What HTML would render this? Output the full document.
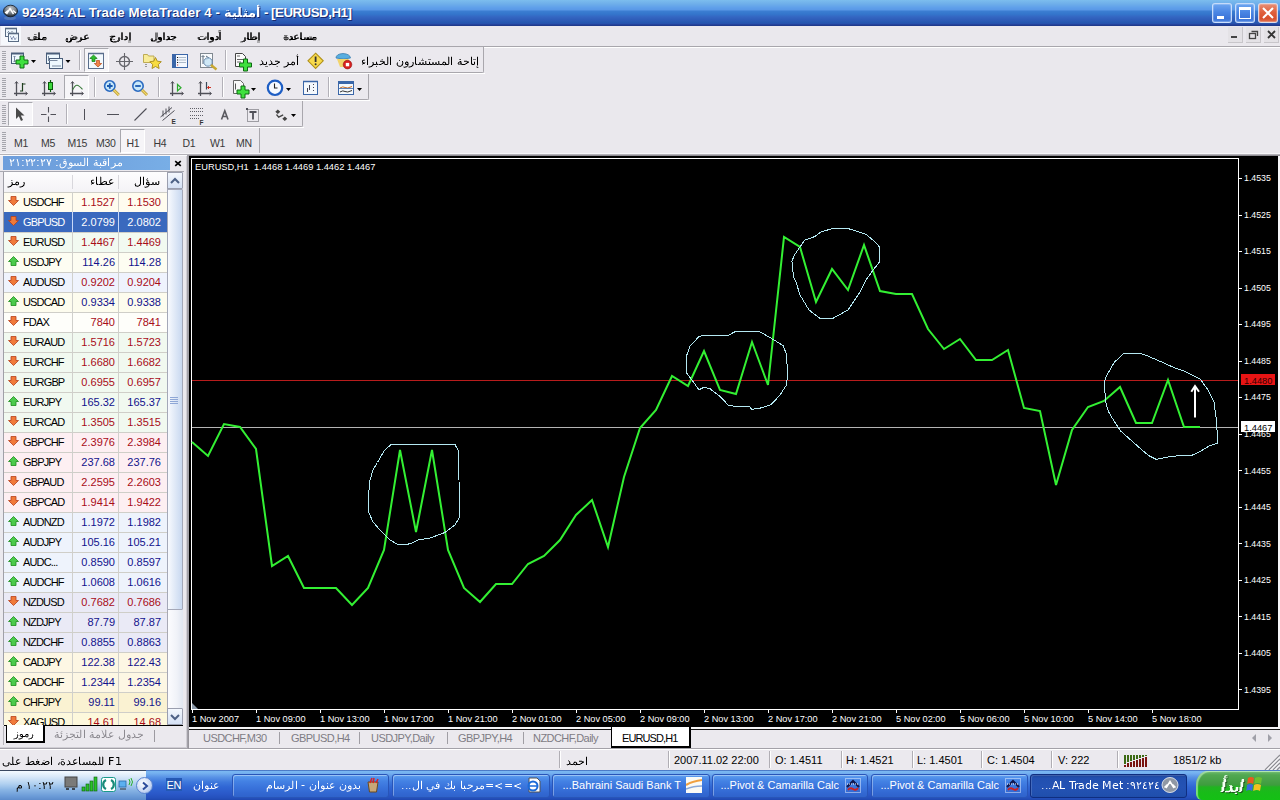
<!DOCTYPE html><html><head><meta charset="utf-8"><style>
*{box-sizing:border-box}
body{margin:0;width:1280px;height:800px;overflow:hidden;position:relative;background:#EAE8ED;font-family:"Liberation Sans",sans-serif;font-size:11px;color:#000}
.ab{position:absolute}
.t{position:absolute;white-space:nowrap;line-height:1}
</style></head><body><div class="ab" style="left:0;top:0;width:1280px;height:26px;background:linear-gradient(#7CBDEE 0px,#6EAEEA 4px,#5E9EEA 8px,#5A98E6 10px,#3C7ED2 11px,#3476CC 14px,#3466C2 17px,#2E5CB8 20px,#2457AE 23px,#2A4CAC 24px,#1F3A8C 25px,#1F3A8C 26px)"></div><div class="t" style="left:22px;top:6px;font-size:13.3px;font-weight:bold;letter-spacing:0.1px;color:#fff;text-shadow:1px 1px 0 #1A2A6E">92434: AL Trade MetaTrader 4 -</div><div class="t" style="left:264px;top:6px;font-size:13.3px;font-weight:bold;letter-spacing:-0.5px;color:#fff;text-shadow:1px 1px 0 #1A2A6E">- [EURUSD,H1]</div><svg width="36" height="15" style="position:absolute;left:225px;top:5px" fill="#1A2A6E" shape-rendering="crispEdges"><path d="M34 0h1v1h-1zM35 1h1v1h-1zM35 2h1v1h-1zM35 4h1v1h-1zM35 5h1v1h-1zM21 6h1v1h-1zM35 6h1v1h-1zM21 7h1v1h-1zM35 7h1v1h-1zM3 8h1v1h-1zM6 8h1v1h-1zM35 8h1v1h-1zM1 9h1v1h-1zM30 9h1v1h-1zM35 9h1v1h-1zM25 10h1v1h-1zM35 10h1v1h-1zM18 11h1v1h-1zM35 11h1v1h-1zM1 12h1v1h-1zM35 12h1v1h-1zM27 13h3v1h-3zM10 14h1v1h-1z" fill-opacity="0.25"/><path d="M34 2h1v1h-1zM14 3h1v1h-1zM35 3h1v1h-1zM14 4h1v1h-1zM14 5h1v1h-1zM21 5h1v1h-1zM2 6h2v1h-2zM14 6h1v1h-1zM14 7h1v1h-1zM20 7h1v1h-1zM14 8h1v1h-1zM6 9h1v1h-1zM9 9h1v1h-1zM14 9h1v1h-1zM20 9h1v1h-1zM26 9h1v1h-1zM3 10h1v1h-1zM9 10h1v1h-1zM14 10h1v1h-1zM20 10h1v1h-1zM28 11h1v1h-1zM4 12h1v1h-1zM10 12h1v1h-1zM15 12h1v1h-1zM18 12h1v1h-1zM21 12h1v1h-1zM9 14h1v1h-1z" fill-opacity="0.50"/><path d="M34 1h1v1h-1zM33 2h1v1h-1zM16 3h1v1h-1zM16 4h1v1h-1zM16 5h1v1h-1zM4 6h1v1h-1zM16 6h1v1h-1zM16 7h1v1h-1zM4 8h2v1h-2zM16 8h1v1h-1zM10 9h2v1h-2zM16 9h1v1h-1zM21 9h2v1h-2zM29 9h1v1h-1zM4 10h1v1h-1zM6 10h1v1h-1zM11 10h1v1h-1zM16 10h1v1h-1zM22 10h1v1h-1zM28 10h1v1h-1zM3 11h1v1h-1zM7 11h2v1h-2zM12 11h2v1h-2zM17 11h1v1h-1zM19 11h1v1h-1zM23 11h2v1h-2zM27 11h1v1h-1zM2 12h2v1h-2zM5 12h1v1h-1zM30 12h1v1h-1z" fill-opacity="0.75"/><path d="M33 1h1v1h-1zM15 3h1v1h-1zM33 3h2v1h-2zM15 4h1v1h-1zM33 4h2v1h-2zM15 5h1v1h-1zM33 5h2v1h-2zM15 6h1v1h-1zM33 6h2v1h-2zM15 7h1v1h-1zM22 7h1v1h-1zM33 7h2v1h-2zM15 8h1v1h-1zM33 8h2v1h-2zM2 9h4v1h-4zM15 9h1v1h-1zM27 9h2v1h-2zM33 9h2v1h-2zM1 10h2v1h-2zM5 10h1v1h-1zM10 10h1v1h-1zM15 10h1v1h-1zM21 10h1v1h-1zM26 10h2v1h-2zM29 10h2v1h-2zM33 10h2v1h-2zM1 11h2v1h-2zM4 11h3v1h-3zM9 11h3v1h-3zM14 11h3v1h-3zM20 11h3v1h-3zM25 11h2v1h-2zM29 11h2v1h-2zM33 11h2v1h-2zM6 12h4v1h-4zM11 12h4v1h-4zM16 12h2v1h-2zM19 12h2v1h-2zM22 12h8v1h-8zM33 12h2v1h-2zM11 14h1v1h-1z"/></svg><svg width="36" height="15" style="position:absolute;left:224px;top:4px" fill="#fff" shape-rendering="crispEdges"><path d="M34 0h1v1h-1zM35 1h1v1h-1zM35 2h1v1h-1zM35 4h1v1h-1zM35 5h1v1h-1zM21 6h1v1h-1zM35 6h1v1h-1zM21 7h1v1h-1zM35 7h1v1h-1zM3 8h1v1h-1zM6 8h1v1h-1zM35 8h1v1h-1zM1 9h1v1h-1zM30 9h1v1h-1zM35 9h1v1h-1zM25 10h1v1h-1zM35 10h1v1h-1zM18 11h1v1h-1zM35 11h1v1h-1zM1 12h1v1h-1zM35 12h1v1h-1zM27 13h3v1h-3zM10 14h1v1h-1z" fill-opacity="0.25"/><path d="M34 2h1v1h-1zM14 3h1v1h-1zM35 3h1v1h-1zM14 4h1v1h-1zM14 5h1v1h-1zM21 5h1v1h-1zM2 6h2v1h-2zM14 6h1v1h-1zM14 7h1v1h-1zM20 7h1v1h-1zM14 8h1v1h-1zM6 9h1v1h-1zM9 9h1v1h-1zM14 9h1v1h-1zM20 9h1v1h-1zM26 9h1v1h-1zM3 10h1v1h-1zM9 10h1v1h-1zM14 10h1v1h-1zM20 10h1v1h-1zM28 11h1v1h-1zM4 12h1v1h-1zM10 12h1v1h-1zM15 12h1v1h-1zM18 12h1v1h-1zM21 12h1v1h-1zM9 14h1v1h-1z" fill-opacity="0.50"/><path d="M34 1h1v1h-1zM33 2h1v1h-1zM16 3h1v1h-1zM16 4h1v1h-1zM16 5h1v1h-1zM4 6h1v1h-1zM16 6h1v1h-1zM16 7h1v1h-1zM4 8h2v1h-2zM16 8h1v1h-1zM10 9h2v1h-2zM16 9h1v1h-1zM21 9h2v1h-2zM29 9h1v1h-1zM4 10h1v1h-1zM6 10h1v1h-1zM11 10h1v1h-1zM16 10h1v1h-1zM22 10h1v1h-1zM28 10h1v1h-1zM3 11h1v1h-1zM7 11h2v1h-2zM12 11h2v1h-2zM17 11h1v1h-1zM19 11h1v1h-1zM23 11h2v1h-2zM27 11h1v1h-1zM2 12h2v1h-2zM5 12h1v1h-1zM30 12h1v1h-1z" fill-opacity="0.75"/><path d="M33 1h1v1h-1zM15 3h1v1h-1zM33 3h2v1h-2zM15 4h1v1h-1zM33 4h2v1h-2zM15 5h1v1h-1zM33 5h2v1h-2zM15 6h1v1h-1zM33 6h2v1h-2zM15 7h1v1h-1zM22 7h1v1h-1zM33 7h2v1h-2zM15 8h1v1h-1zM33 8h2v1h-2zM2 9h4v1h-4zM15 9h1v1h-1zM27 9h2v1h-2zM33 9h2v1h-2zM1 10h2v1h-2zM5 10h1v1h-1zM10 10h1v1h-1zM15 10h1v1h-1zM21 10h1v1h-1zM26 10h2v1h-2zM29 10h2v1h-2zM33 10h2v1h-2zM1 11h2v1h-2zM4 11h3v1h-3zM9 11h3v1h-3zM14 11h3v1h-3zM20 11h3v1h-3zM25 11h2v1h-2zM29 11h2v1h-2zM33 11h2v1h-2zM6 12h4v1h-4zM11 12h4v1h-4zM16 12h2v1h-2zM19 12h2v1h-2zM22 12h8v1h-8zM33 12h2v1h-2zM11 14h1v1h-1z"/></svg><svg class="ab" style="left:0px;top:0px" width="22" height="24" viewBox="0 0 22 24"><defs><radialGradient id="tg" cx=".5" cy=".3" r=".7"><stop offset="0" stop-color="#C8CCD0"/><stop offset=".6" stop-color="#707880"/><stop offset="1" stop-color="#1A2028"/></radialGradient></defs><ellipse cx="10" cy="18" rx="6" ry="2" fill="#6A88B8" opacity=".6"/><ellipse cx="10.5" cy="11" rx="7" ry="5.8" fill="url(#tg)" stroke="#101820" stroke-width=".8"/><path d="M6.5 14L10 8.5 13.5 14M8 10.5L5 13M13 10.5L16 13" stroke="#fff" stroke-width="1.4" fill="none"/></svg><div class="ab" style="left:1212px;top:3px;width:20px;height:20px;border:1px solid rgba(220,235,255,.85);border-radius:3px;background:linear-gradient(#6EA6F0,#4A86E4 45%,#3C74D8 80%,#4C84E0);box-shadow:inset 0 0 0 1px rgba(255,255,255,.2)"><div class="ab" style="left:4px;top:12px;width:7px;height:3px;background:#fff"></div></div><div class="ab" style="left:1235px;top:3px;width:20px;height:20px;border:1px solid rgba(220,235,255,.85);border-radius:3px;background:linear-gradient(#6EA6F0,#4A86E4 45%,#3C74D8 80%,#4C84E0);box-shadow:inset 0 0 0 1px rgba(255,255,255,.2)"><div class="ab" style="left:3px;top:3px;width:12px;height:12px;border:1px solid #fff;border-top-width:3px"></div></div><div class="ab" style="left:1258px;top:3px;width:20px;height:20px;border:1px solid rgba(220,235,255,.85);border-radius:3px;background:linear-gradient(#E89078,#E0603C 45%,#D8502C 80%,#E07050);box-shadow:inset 0 0 0 1px rgba(255,255,255,.2)"><svg class="ab" style="left:3px;top:3px" width="12" height="12"><path d="M1 1L11 11M11 1L1 11" stroke="#fff" stroke-width="2"/></svg></div><div class="ab" style="left:0;top:26px;width:1280px;height:20px;background:#EAE8ED"></div><div class="ab" style="left:0;top:46px;width:1280px;height:1px;background:#A8A6AC"></div><div class="ab" style="left:0;top:47px;width:1280px;height:1px;background:#fff"></div><svg width="20" height="9" style="position:absolute;left:27px;top:32px" fill="#000" shape-rendering="crispEdges"><path d="M9 2h1v1h-1zM6 4h1v1h-1zM0 5h1v1h-1zM15 5h1v1h-1zM19 5h1v1h-1zM0 6h1v1h-1zM10 6h1v1h-1zM13 6h1v1h-1zM19 7h1v1h-1zM2 8h1v1h-1zM6 8h2v1h-2zM16 8h3v1h-3z" fill-opacity="0.25"/><path d="M11 0h2v1h-2zM7 2h2v1h-2zM9 4h1v1h-1zM1 5h2v1h-2zM6 5h2v1h-2zM10 5h1v1h-1zM1 6h2v1h-2zM6 6h1v1h-1zM9 6h1v1h-1zM17 6h3v1h-3zM4 7h2v1h-2zM3 8h3v1h-3z" fill-opacity="0.50"/><path d="M11 1h2v1h-2zM11 2h2v1h-2zM11 3h2v1h-2zM7 4h2v1h-2zM11 4h2v1h-2zM8 5h2v1h-2zM11 5h2v1h-2zM7 6h2v1h-2zM15 6h2v1h-2zM1 7h3v1h-3zM6 7h1v1h-1zM16 7h3v1h-3z" fill-opacity="0.75"/><path d="M16 5h3v1h-3zM11 6h2v1h-2zM7 7h9v1h-9z"/></svg><svg width="24" height="9" style="position:absolute;left:65px;top:34px" fill="#000" shape-rendering="crispEdges"><path d="M21 0h2v1h-2zM19 1h1v1h-1zM11 2h1v1h-1zM5 3h2v1h-2zM12 3h1v1h-1zM9 4h1v1h-1zM12 4h1v1h-1zM17 4h1v1h-1zM0 5h1v1h-1zM11 5h1v1h-1zM21 5h1v1h-1zM0 6h1v1h-1zM11 7h1v1h-1zM2 8h1v1h-1zM5 8h1v1h-1zM11 8h3v1h-3z" fill-opacity="0.25"/><path d="M6 1h2v1h-2zM22 1h1v1h-1zM8 2h3v1h-3zM9 3h1v1h-1zM15 3h2v1h-2zM22 3h2v1h-2zM8 4h1v1h-1zM19 4h1v1h-1zM23 4h1v1h-1zM1 6h2v1h-2zM14 6h1v1h-1zM3 7h1v1h-1zM6 7h1v1h-1zM12 7h1v1h-1zM3 8h2v1h-2z" fill-opacity="0.50"/><path d="M20 1h2v1h-2zM19 2h2v1h-2zM7 3h2v1h-2zM10 3h2v1h-2zM19 3h2v1h-2zM1 4h2v1h-2zM5 4h3v1h-3zM10 4h2v1h-2zM15 4h2v1h-2zM22 4h1v1h-1zM1 5h2v1h-2zM5 5h1v1h-1zM10 5h1v1h-1zM15 5h1v1h-1zM20 5h1v1h-1zM15 6h2v1h-2zM13 7h3v1h-3z" fill-opacity="0.75"/><path d="M20 4h2v1h-2zM6 5h4v1h-4zM16 5h4v1h-4zM5 6h2v1h-2zM1 7h2v1h-2zM4 7h2v1h-2z"/></svg><svg width="23" height="11" style="position:absolute;left:109px;top:32px" fill="#000" shape-rendering="crispEdges"><path d="M2 3h4v1h-4zM0 4h1v1h-1zM6 4h1v1h-1zM18 4h1v1h-1zM1 5h1v1h-1zM4 5h1v1h-1zM16 5h1v1h-1zM3 6h1v1h-1zM11 6h1v1h-1zM16 6h1v1h-1zM3 7h1v1h-1zM14 7h1v1h-1zM18 7h1v1h-1zM15 8h2v1h-2zM19 8h1v1h-1zM1 9h1v1h-1zM19 9h3v1h-3zM3 10h1v1h-1zM7 10h1v1h-1zM19 10h3v1h-3z" fill-opacity="0.25"/><path d="M12 0h2v1h-2zM20 0h2v1h-2zM9 5h2v1h-2zM4 7h2v1h-2zM8 8h1v1h-1zM20 8h2v1h-2zM4 9h1v1h-1zM4 10h3v1h-3z" fill-opacity="0.50"/><path d="M12 1h2v1h-2zM20 1h2v1h-2zM12 2h2v1h-2zM20 2h2v1h-2zM12 3h2v1h-2zM20 3h2v1h-2zM1 4h2v1h-2zM12 4h2v1h-2zM16 4h2v1h-2zM20 4h2v1h-2zM2 5h2v1h-2zM12 5h2v1h-2zM17 5h2v1h-2zM20 5h2v1h-2zM1 6h2v1h-2zM9 6h2v1h-2zM12 6h2v1h-2zM17 6h2v1h-2zM20 6h2v1h-2zM9 7h2v1h-2zM12 7h2v1h-2zM15 7h1v1h-1zM20 7h2v1h-2zM1 8h2v1h-2zM9 8h2v1h-2zM5 9h5v1h-5z" fill-opacity="0.75"/><path d="M3 4h3v1h-3zM1 7h2v1h-2zM16 7h2v1h-2zM2 9h2v1h-2z"/></svg><svg width="27" height="11" style="position:absolute;left:150px;top:32px" fill="#000" shape-rendering="crispEdges"><path d="M5 0h3v1h-3zM19 4h2v1h-2zM7 5h1v1h-1zM17 5h1v1h-1zM26 5h1v1h-1zM7 6h1v1h-1zM17 6h1v1h-1zM25 6h1v1h-1zM0 7h1v1h-1zM7 7h1v1h-1zM15 7h1v1h-1zM9 8h1v1h-1zM16 8h2v1h-2zM22 8h3v1h-3zM1 9h1v1h-1zM5 9h2v1h-2zM11 9h1v1h-1zM6 10h1v1h-1zM9 10h1v1h-1z" fill-opacity="0.25"/><path d="M13 0h2v1h-2zM5 1h3v1h-3zM5 2h3v1h-3zM5 3h3v1h-3zM5 4h3v1h-3zM25 4h1v1h-1zM5 5h2v1h-2zM11 5h1v1h-1zM23 5h1v1h-1zM1 6h2v1h-2zM5 6h2v1h-2zM22 6h1v1h-1zM8 7h1v1h-1zM23 7h1v1h-1zM3 8h1v1h-1zM6 8h1v1h-1zM2 9h3v1h-3zM7 9h1v1h-1zM7 10h2v1h-2z" fill-opacity="0.50"/><path d="M13 1h2v1h-2zM13 2h2v1h-2zM13 3h2v1h-2zM13 4h2v1h-2zM17 4h2v1h-2zM23 4h2v1h-2zM8 5h1v1h-1zM13 5h2v1h-2zM18 5h2v1h-2zM13 6h2v1h-2zM23 6h2v1h-2zM1 7h2v1h-2zM5 7h2v1h-2zM13 7h2v1h-2zM16 7h1v1h-1zM22 7h1v1h-1zM4 8h2v1h-2zM10 8h2v1h-2zM8 9h3v1h-3z" fill-opacity="0.75"/><path d="M21 4h2v1h-2zM9 5h2v1h-2zM24 5h2v1h-2zM8 6h4v1h-4zM18 6h2v1h-2zM9 7h3v1h-3zM17 7h5v1h-5zM1 8h2v1h-2z"/></svg><svg width="25" height="13" style="position:absolute;left:197px;top:30px" fill="#000" shape-rendering="crispEdges"><path d="M21 0h1v1h-1zM21 1h3v1h-3zM21 2h1v1h-1zM6 6h1v1h-1zM8 6h2v1h-2zM21 6h1v1h-1zM0 7h1v1h-1zM7 7h1v1h-1zM19 7h1v1h-1zM0 8h1v1h-1zM6 8h1v1h-1zM9 8h1v1h-1zM19 8h1v1h-1zM8 9h1v1h-1zM17 9h1v1h-1zM21 9h1v1h-1zM14 10h1v1h-1zM18 10h2v1h-2zM11 11h1v1h-1zM16 11h1v1h-1zM11 12h1v1h-1zM14 12h1v1h-1z" fill-opacity="0.25"/><path d="M22 0h2v1h-2zM10 2h2v1h-2zM3 6h3v1h-3zM8 7h2v1h-2zM16 7h1v1h-1zM1 9h1v1h-1zM13 9h1v1h-1zM12 11h1v1h-1zM12 12h2v1h-2z" fill-opacity="0.50"/><path d="M22 2h2v1h-2zM10 3h2v1h-2zM22 3h2v1h-2zM10 4h2v1h-2zM22 4h2v1h-2zM10 5h2v1h-2zM22 5h2v1h-2zM10 6h2v1h-2zM19 6h2v1h-2zM22 6h2v1h-2zM1 7h2v1h-2zM10 7h2v1h-2zM13 7h1v1h-1zM20 7h4v1h-4zM1 8h2v1h-2zM7 8h2v1h-2zM10 8h2v1h-2zM20 8h4v1h-4zM4 9h4v1h-4zM10 9h2v1h-2zM18 9h1v1h-1zM22 9h2v1h-2zM15 10h2v1h-2zM13 11h3v1h-3z" fill-opacity="0.75"/><path d="M14 7h2v1h-2zM13 8h4v1h-4zM2 9h2v1h-2zM14 9h3v1h-3zM19 9h2v1h-2z"/></svg><svg width="21" height="11" style="position:absolute;left:240px;top:32px" fill="#000" shape-rendering="crispEdges"><path d="M16 4h1v1h-1zM17 5h1v1h-1zM6 6h1v1h-1zM13 6h2v1h-2zM17 6h1v1h-1zM16 7h1v1h-1zM17 8h1v1h-1zM0 9h1v1h-1zM17 9h3v1h-3zM0 10h3v1h-3zM17 10h3v1h-3z" fill-opacity="0.25"/><path d="M7 0h2v1h-2zM10 0h2v1h-2zM18 0h2v1h-2zM13 4h3v1h-3zM4 5h2v1h-2zM14 5h1v1h-1zM7 7h1v1h-1zM3 8h1v1h-1zM18 8h2v1h-2zM1 9h1v1h-1z" fill-opacity="0.50"/><path d="M7 1h2v1h-2zM10 1h2v1h-2zM18 1h2v1h-2zM7 2h2v1h-2zM10 2h2v1h-2zM18 2h2v1h-2zM7 3h2v1h-2zM10 3h2v1h-2zM18 3h2v1h-2zM7 4h2v1h-2zM10 4h2v1h-2zM18 4h2v1h-2zM7 5h2v1h-2zM10 5h4v1h-4zM15 5h2v1h-2zM18 5h2v1h-2zM4 6h2v1h-2zM10 6h3v1h-3zM18 6h2v1h-2zM4 7h2v1h-2zM15 7h1v1h-1zM18 7h2v1h-2zM4 8h2v1h-2zM2 9h3v1h-3z" fill-opacity="0.75"/><path d="M7 6h2v1h-2zM15 6h2v1h-2zM8 7h7v1h-7z"/></svg><svg width="34" height="9" style="position:absolute;left:283px;top:32px" fill="#000" shape-rendering="crispEdges"><path d="M13 2h2v1h-2zM4 3h1v1h-1zM11 3h1v1h-1zM1 4h1v1h-1zM9 4h1v1h-1zM26 4h3v1h-3zM0 5h1v1h-1zM5 5h1v1h-1zM7 5h1v1h-1zM23 5h1v1h-1zM26 5h1v1h-1zM29 5h1v1h-1zM33 5h1v1h-1zM0 6h1v1h-1zM7 6h1v1h-1zM5 7h1v1h-1zM13 7h1v1h-1zM33 7h1v1h-1zM2 8h2v1h-2zM6 8h2v1h-2zM30 8h3v1h-3z" fill-opacity="0.25"/><path d="M17 0h2v1h-2zM1 3h3v1h-3zM14 3h1v1h-1zM2 4h2v1h-2zM14 5h2v1h-2zM21 5h2v1h-2zM27 5h2v1h-2zM1 6h5v1h-5zM11 6h1v1h-1zM15 6h1v1h-1zM23 6h1v1h-1zM26 6h1v1h-1zM31 6h3v1h-3zM17 7h1v1h-1z" fill-opacity="0.50"/><path d="M17 1h2v1h-2zM17 2h2v1h-2zM12 3h2v1h-2zM17 3h2v1h-2zM7 4h2v1h-2zM11 4h2v1h-2zM17 4h2v1h-2zM1 5h4v1h-4zM8 5h2v1h-2zM11 5h2v1h-2zM17 5h2v1h-2zM24 5h2v1h-2zM14 6h1v1h-1zM21 6h2v1h-2zM27 6h4v1h-4zM1 7h4v1h-4zM6 7h1v1h-1zM12 7h1v1h-1zM22 7h1v1h-1zM30 7h3v1h-3z" fill-opacity="0.75"/><path d="M30 5h3v1h-3zM8 6h2v1h-2zM12 6h2v1h-2zM17 6h2v1h-2zM24 6h2v1h-2zM7 7h5v1h-5zM18 7h4v1h-4zM23 7h7v1h-7z"/></svg><svg class="ab" style="left:0px;top:0px" width="22" height="48" viewBox="0 0 22 48"><rect x="1" y="26" width="20" height="19" fill="#F6F8FC"/><rect x="5.5" y="28.5" width="11" height="8" fill="#F0F8FE" stroke="#5A6C84"/><path d="M5 28.5h12" stroke="#5A6C84" stroke-width="1.6"/><path d="M7.5 32.5l1-1 1 1M11 32.5l1-1 1 1" stroke="#5A6C84" fill="none"/><rect x="8.5" y="33.5" width="10" height="8" fill="#F0F8FE" stroke="#5A6C84"/><path d="M8 33.5h11" stroke="#5A6C84" stroke-width="1.6"/><path d="M10.5 36.5l1.5 3 1.5-3 1.5 3 1.5-2" stroke="#4A5A8A" stroke-dasharray="1 .6" fill="none"/></svg><div class="ab" style="left:1228px;top:27px;width:15px;height:16px;background:#E4E2E6;border-right:1px solid #C8C6CA;border-bottom:1px solid #C8C6CA"></div><div class="ab" style="left:1246px;top:27px;width:15px;height:16px;background:#E4E2E6;border-right:1px solid #C8C6CA;border-bottom:1px solid #C8C6CA"></div><div class="ab" style="left:1264px;top:27px;width:15px;height:16px;background:#E4E2E6;border-right:1px solid #C8C6CA;border-bottom:1px solid #C8C6CA"></div><div class="ab" style="left:1231px;top:36px;width:6px;height:2px;background:#444"></div><svg class="ab" style="left:1248px;top:29px" width="12" height="12"><rect x="1.5" y="4.5" width="6" height="5" fill="none" stroke="#444" stroke-width="1.3"/><path d="M3.5 2.5H9.5V7" fill="none" stroke="#444" stroke-width="1.3"/></svg><svg class="ab" style="left:1266px;top:29px" width="12" height="12"><path d="M2 2L9 9M9 2L2 9" stroke="#333" stroke-width="1.8"/></svg><div class="ab" style="left:0;top:47px;width:484px;height:26px;border-right:1px solid #A9A7AD;border-bottom:1px solid #A9A7AD;border-bottom-right-radius:2px;background:#EBE9EE"></div><div class="ab" style="left:0;top:73px;width:485px;height:1px;background:#fff"></div><div class="ab" style="left:2px;top:51px"><div style="height:1px;margin-bottom:1px;background:#A5A5AC;width:4px"></div><div style="height:1px;margin-bottom:1px;background:#A5A5AC;width:4px"></div><div style="height:1px;margin-bottom:1px;background:#A5A5AC;width:4px"></div><div style="height:1px;margin-bottom:1px;background:#A5A5AC;width:4px"></div><div style="height:1px;margin-bottom:1px;background:#A5A5AC;width:4px"></div><div style="height:1px;margin-bottom:1px;background:#A5A5AC;width:4px"></div><div style="height:1px;margin-bottom:1px;background:#A5A5AC;width:4px"></div><div style="height:1px;margin-bottom:1px;background:#A5A5AC;width:4px"></div><div style="height:1px;margin-bottom:1px;background:#A5A5AC;width:4px"></div><div style="height:1px;margin-bottom:1px;background:#A5A5AC;width:4px"></div></div><svg class="ab" style="left:0px;top:0px" width="40" height="75" viewBox="0 0 40 75"><rect x="11.5" y="53.5" width="12" height="10" fill="#EEF8FE" stroke="#4A5E7A"/><path d="M11 53.5h13" stroke="#4A5E7A" stroke-width="2"/><path d="M14.5 56v6M13.5 57l1-1 1 1M13.5 61l1 1 1-1" stroke="#7A8AA0" fill="none"/><path d="M20 56h4v4h4v4h-4v4h-4v-4h-4v-4h4z" fill="#3EE03E" stroke="#0E6A12" stroke-width="1"/><path d="M31 60h5l-2.5 3z" fill="#000"/></svg><svg class="ab" style="left:0px;top:0px" width="75" height="75" viewBox="0 0 75 75"><rect x="46.5" y="53.5" width="13" height="10" fill="#EEF8FE" stroke="#4A5E7A"/><path d="M46 53.5h14" stroke="#4A5E7A" stroke-width="2"/><rect x="49.5" y="58.5" width="13" height="10" fill="#EEF8FE" stroke="#4A5E7A"/><path d="M48.5 56v5M48.5 60.5h9M52 66h9" stroke="#7A8AA0" fill="none"/><path d="M65.5 60h5l-2.5 3z" fill="#000"/></svg><div class="ab" style="left:79px;top:50px;width:1px;height:20px;background:#B3B1B8"></div><div class="ab" style="left:80px;top:50px;width:1px;height:20px;background:#fff"></div><div class="ab" style="left:84px;top:48px;width:25px;height:24px;background:#F6F5F8;border-left:1px solid #A8A8AE;border-top:1px solid #A8A8AE;border-right:1px solid #fff;border-bottom:1px solid #fff"></div><svg class="ab" style="left:0px;top:0px" width="110" height="75" viewBox="0 0 110 75"><rect x="88.5" y="53.5" width="15" height="15" fill="#F2F9FE" stroke="#5A6E8C"/><path d="M88 53.5h16" stroke="#5A6E8C" stroke-width="1.5"/><path d="M92 61.5v-3h-2.2L93.5 55l3.7 3.5H95v3z" fill="#2EBE2E" stroke="#127A12" stroke-width=".7"/><path d="M96.5 60.5v3h-2.2l3.7 3.5 3.7-3.5H99.5v-3z" fill="#F0844A" stroke="#B84A18" stroke-width=".7"/></svg><svg class="ab" style="left:0px;top:0px" width="140" height="75" viewBox="0 0 140 75"><circle cx="124.5" cy="61.5" r="5" fill="none" stroke="#66666C" stroke-width="1.4"/><path d="M124.5 53v17M116 61.5h17" stroke="#66666C" stroke-width="1.1"/></svg><svg class="ab" style="left:0px;top:0px" width="170" height="75" viewBox="0 0 170 75"><path d="M143.5 54.5h4l1 1.5h5.5v6.5h-10.5z" fill="#F8EC98" stroke="#B8A448" stroke-width=".9"/><path d="M146 64v4" stroke="#444" stroke-dasharray="1 1"/><path d="M155.5 57.5l1.8 3.7 4 .5-3 2.8.8 4-3.6-2-3.5 2 .7-4-2.9-2.8 4-.5z" fill="#F8DC40" stroke="#A88A18" stroke-width=".9"/></svg><svg class="ab" style="left:0px;top:0px" width="190" height="75" viewBox="0 0 190 75"><rect x="172.5" y="54.5" width="15" height="13" fill="#F4F8FE" stroke="#3A66A8"/><rect x="173" y="55" width="3" height="12" fill="#3A66A8"/><path d="M179 57.5h7M179 60h7M179 62.5h7" stroke="#9AB" stroke-width=".8"/><path d="M177 57.5h1.2M177 60h1.2M177 62.5h1.2" stroke="#111"/><path d="M177 65h1.2" stroke="#C03030"/></svg><svg class="ab" style="left:0px;top:0px" width="222" height="75" viewBox="0 0 222 75"><rect x="200.5" y="53.5" width="12" height="14" fill="#F8FAFC" stroke="#808890"/><path d="M203 56v8M201.5 57l1.5-1.5 1.5 1.5M206 56l3 2-3 2" stroke="#4A5A6A" fill="none" stroke-width=".9"/><circle cx="208" cy="62" r="4.2" fill="#C8E4F4" fill-opacity=".85" stroke="#6E8EB0"/><path d="M211 65l5.5 4.5" stroke="#C8A830" stroke-width="2.4"/></svg><div class="ab" style="left:225px;top:50px;width:1px;height:20px;background:#B3B1B8"></div><div class="ab" style="left:226px;top:50px;width:1px;height:20px;background:#fff"></div><svg class="ab" style="left:0px;top:0px" width="256" height="75" viewBox="0 0 256 75"><path d="M235.5 53.5h7l3 3v10h-10z" fill="#FCFCFC" stroke="#444"/><path d="M237 56h3M237 59.5h6M237 62h4" stroke="#666" stroke-width="1"/><path d="M243.5 59h4v4h4v4h-4v4h-4v-4h-4v-4h4z" fill="#3EE03E" stroke="#0E6A12" stroke-width="1"/></svg><svg width="40" height="14" style="position:absolute;left:259px;top:54px" fill="#000" shape-rendering="crispEdges"><path d="M37 1h2v1h-2zM37 2h1v1h-1zM39 2h1v1h-1zM16 6h3v1h-3zM2 7h1v1h-1zM7 7h1v1h-1zM11 7h1v1h-1zM33 7h2v1h-2zM4 8h1v1h-1zM13 8h1v1h-1zM18 8h1v1h-1zM32 8h1v1h-1zM19 9h1v1h-1zM28 9h1v1h-1zM33 9h1v1h-1zM0 10h1v1h-1zM9 10h1v1h-1zM1 11h1v1h-1zM10 11h1v1h-1zM27 11h1v1h-1zM29 11h1v1h-1zM33 11h2v1h-2zM17 12h1v1h-1zM24 12h1v1h-1zM28 12h1v1h-1zM24 13h1v1h-1zM26 13h1v1h-1z" fill-opacity="0.25"/><path d="M38 0h1v1h-1zM2 6h1v1h-1zM11 6h1v1h-1zM20 7h1v1h-1zM28 8h2v1h-2zM4 9h1v1h-1zM13 9h1v1h-1zM17 9h1v1h-1zM3 10h1v1h-1zM7 10h1v1h-1zM12 10h1v1h-1zM17 10h1v1h-1zM28 10h1v1h-1zM6 12h3v1h-3zM18 12h1v1h-1zM25 12h1v1h-1zM25 13h1v1h-1z" fill-opacity="0.50"/><path d="M3 7h1v1h-1zM12 7h1v1h-1zM16 7h4v1h-4zM3 8h1v1h-1zM12 8h1v1h-1zM20 8h1v1h-1zM34 8h2v1h-2zM29 9h1v1h-1zM32 9h1v1h-1zM1 10h1v1h-1zM4 10h1v1h-1zM10 10h1v1h-1zM13 10h1v1h-1zM32 10h1v1h-1zM34 10h2v1h-2zM26 12h1v1h-1z" fill-opacity="0.75"/><path d="M38 2h1v1h-1zM38 3h1v1h-1zM38 4h1v1h-1zM38 5h1v1h-1zM38 6h1v1h-1zM38 7h1v1h-1zM7 8h1v1h-1zM19 8h1v1h-1zM33 8h1v1h-1zM38 8h1v1h-1zM3 9h1v1h-1zM7 9h1v1h-1zM12 9h1v1h-1zM18 9h1v1h-1zM35 9h1v1h-1zM38 9h1v1h-1zM2 10h1v1h-1zM5 10h2v1h-2zM11 10h1v1h-1zM14 10h3v1h-3zM29 10h3v1h-3zM33 10h1v1h-1zM38 10h1v1h-1zM28 11h1v1h-1zM27 12h1v1h-1z"/></svg><svg class="ab" style="left:0px;top:0px" width="330" height="75" viewBox="0 0 330 75"><path d="M315.6 53.2L323.2 60.8 315.6 68.4 308 60.8Z" fill="#F8DA4C" stroke="#B09018" stroke-width="1.1"/><path d="M315.6 56.5V62" stroke="#333" stroke-width="1.8"/><circle cx="315.6" cy="64.3" r="1" fill="#333"/></svg><svg class="ab" style="left:0px;top:0px" width="360" height="75" viewBox="0 0 360 75"><path d="M336 58q0-4 7-4.5q7 .5 7.5 4.5q-7 2-14.5 0z" fill="#58AEE0" stroke="#3A7EB0" stroke-width=".8"/><path d="M337 59h12l-3 8h-6z" fill="#F2D46C"/><circle cx="347.5" cy="64.6" r="4.3" fill="#D82020" stroke="#901010" stroke-width=".6"/><rect x="345.8" y="62.9" width="3.4" height="3.4" fill="#fff"/></svg><svg width="118" height="12" style="position:absolute;left:361px;top:56px" fill="#000" shape-rendering="crispEdges"><path d="M6 0h1v1h-1zM26 0h1v1h-1zM29 0h1v1h-1zM54 0h1v1h-1zM87 0h1v1h-1zM90 0h1v1h-1zM110 0h1v1h-1zM116 0h1v1h-1zM27 1h1v1h-1zM88 1h1v1h-1zM27 2h1v1h-1zM61 2h1v1h-1zM88 2h1v1h-1zM2 3h2v1h-2zM20 3h1v1h-1zM27 3h1v1h-1zM88 3h1v1h-1zM19 4h3v1h-3zM27 4h1v1h-1zM88 4h1v1h-1zM103 4h3v1h-3zM15 5h1v1h-1zM27 5h1v1h-1zM46 5h1v1h-1zM65 5h1v1h-1zM68 5h1v1h-1zM78 5h1v1h-1zM82 5h2v1h-2zM88 5h1v1h-1zM100 5h1v1h-1zM113 5h1v1h-1zM4 6h1v1h-1zM21 6h1v1h-1zM27 6h1v1h-1zM42 6h1v1h-1zM47 6h1v1h-1zM65 6h1v1h-1zM78 6h1v1h-1zM81 6h1v1h-1zM88 6h1v1h-1zM105 6h1v1h-1zM11 7h1v1h-1zM16 7h1v1h-1zM27 7h1v1h-1zM35 7h1v1h-1zM42 7h1v1h-1zM45 7h1v1h-1zM51 7h1v1h-1zM55 7h1v1h-1zM69 7h1v1h-1zM82 7h1v1h-1zM85 7h1v1h-1zM88 7h1v1h-1zM96 7h1v1h-1zM98 7h1v1h-1zM106 7h1v1h-1zM111 7h1v1h-1zM35 8h1v1h-1zM40 8h1v1h-1zM10 9h1v1h-1zM12 9h1v1h-1zM38 9h2v1h-2zM47 9h1v1h-1zM50 9h1v1h-1zM52 9h1v1h-1zM83 9h1v1h-1zM7 10h1v1h-1zM11 10h1v1h-1zM40 10h1v1h-1zM42 10h2v1h-2zM47 10h1v1h-1zM51 10h1v1h-1zM115 10h2v1h-2zM7 11h1v1h-1zM9 11h1v1h-1zM42 11h1v1h-1zM45 11h1v1h-1zM47 11h1v1h-1zM49 11h1v1h-1zM115 11h1v1h-1zM117 11h1v1h-1z" fill-opacity="0.25"/><path d="M21 3h1v1h-1zM61 3h1v1h-1zM67 3h3v1h-3zM98 3h1v1h-1zM112 3h3v1h-3zM3 4h1v1h-1zM60 4h3v1h-3zM23 5h1v1h-1zM45 5h1v1h-1zM98 5h1v1h-1zM107 5h1v1h-1zM3 6h1v1h-1zM11 6h2v1h-2zM36 6h1v1h-1zM51 6h2v1h-2zM58 6h2v1h-2zM61 6h2v1h-2zM71 6h2v1h-2zM74 6h2v1h-2zM98 6h1v1h-1zM100 6h1v1h-1zM1 7h1v1h-1zM20 7h1v1h-1zM22 7h1v1h-1zM46 7h2v1h-2zM65 7h1v1h-1zM78 7h1v1h-1zM104 7h1v1h-1zM1 8h1v1h-1zM11 8h1v1h-1zM17 8h1v1h-1zM20 8h1v1h-1zM23 8h1v1h-1zM44 8h1v1h-1zM47 8h1v1h-1zM51 8h2v1h-2zM54 8h1v1h-1zM56 8h1v1h-1zM97 8h3v1h-3zM104 8h1v1h-1zM110 8h1v1h-1zM113 8h1v1h-1zM37 9h1v1h-1zM41 9h1v1h-1zM116 9h1v1h-1zM8 10h1v1h-1zM37 10h1v1h-1zM44 10h1v1h-1zM46 10h1v1h-1zM48 10h1v1h-1zM8 11h1v1h-1zM44 11h1v1h-1zM48 11h1v1h-1z" fill-opacity="0.50"/><path d="M26 1h1v1h-1zM87 1h1v1h-1zM26 2h1v1h-1zM87 2h1v1h-1zM26 3h1v1h-1zM87 3h1v1h-1zM99 3h1v1h-1zM1 4h2v1h-2zM26 4h1v1h-1zM38 4h1v1h-1zM87 4h1v1h-1zM19 5h4v1h-4zM26 5h1v1h-1zM64 5h1v1h-1zM77 5h1v1h-1zM87 5h1v1h-1zM103 5h4v1h-4zM1 6h2v1h-2zM23 6h1v1h-1zM26 6h1v1h-1zM41 6h1v1h-1zM44 6h2v1h-2zM64 6h1v1h-1zM77 6h1v1h-1zM83 6h2v1h-2zM87 6h1v1h-1zM97 6h1v1h-1zM99 6h1v1h-1zM107 6h1v1h-1zM3 7h1v1h-1zM12 7h1v1h-1zM23 7h1v1h-1zM26 7h1v1h-1zM36 7h1v1h-1zM41 7h1v1h-1zM52 7h1v1h-1zM58 7h2v1h-2zM61 7h2v1h-2zM64 7h1v1h-1zM71 7h2v1h-2zM74 7h2v1h-2zM77 7h1v1h-1zM81 7h1v1h-1zM87 7h1v1h-1zM97 7h1v1h-1zM99 7h2v1h-2zM15 8h1v1h-1zM26 8h1v1h-1zM36 8h1v1h-1zM58 8h2v1h-2zM61 8h2v1h-2zM64 8h2v1h-2zM68 8h1v1h-1zM71 8h2v1h-2zM74 8h2v1h-2zM77 8h2v1h-2zM81 8h1v1h-1zM83 8h1v1h-1zM87 8h1v1h-1zM100 8h1v1h-1zM36 9h1v1h-1zM40 9h1v1h-1zM46 9h1v1h-1zM9 10h1v1h-1zM15 10h1v1h-1zM38 10h2v1h-2zM45 10h1v1h-1zM49 10h1v1h-1zM43 11h1v1h-1zM116 11h1v1h-1z" fill-opacity="0.75"/><path d="M6 1h1v1h-1zM29 1h1v1h-1zM54 1h1v1h-1zM90 1h1v1h-1zM110 1h1v1h-1zM116 1h1v1h-1zM6 2h1v1h-1zM29 2h1v1h-1zM54 2h1v1h-1zM90 2h1v1h-1zM110 2h1v1h-1zM116 2h1v1h-1zM6 3h1v1h-1zM29 3h1v1h-1zM54 3h1v1h-1zM90 3h1v1h-1zM110 3h1v1h-1zM116 3h1v1h-1zM6 4h1v1h-1zM29 4h1v1h-1zM54 4h1v1h-1zM90 4h1v1h-1zM110 4h1v1h-1zM116 4h1v1h-1zM1 5h1v1h-1zM6 5h1v1h-1zM29 5h1v1h-1zM41 5h1v1h-1zM54 5h1v1h-1zM90 5h1v1h-1zM99 5h1v1h-1zM110 5h1v1h-1zM116 5h1v1h-1zM6 6h1v1h-1zM15 6h1v1h-1zM22 6h1v1h-1zM29 6h1v1h-1zM46 6h1v1h-1zM54 6h1v1h-1zM68 6h1v1h-1zM82 6h1v1h-1zM90 6h1v1h-1zM106 6h1v1h-1zM110 6h1v1h-1zM113 6h1v1h-1zM116 6h1v1h-1zM2 7h1v1h-1zM6 7h1v1h-1zM15 7h1v1h-1zM21 7h1v1h-1zM29 7h1v1h-1zM44 7h1v1h-1zM54 7h1v1h-1zM68 7h1v1h-1zM84 7h1v1h-1zM90 7h1v1h-1zM105 7h1v1h-1zM110 7h1v1h-1zM113 7h1v1h-1zM116 7h1v1h-1zM6 8h1v1h-1zM12 8h3v1h-3zM16 8h1v1h-1zM18 8h2v1h-2zM24 8h2v1h-2zM29 8h1v1h-1zM41 8h1v1h-1zM45 8h2v1h-2zM55 8h1v1h-1zM57 8h1v1h-1zM60 8h1v1h-1zM63 8h1v1h-1zM66 8h2v1h-2zM69 8h2v1h-2zM73 8h1v1h-1zM76 8h1v1h-1zM79 8h2v1h-2zM82 8h1v1h-1zM84 8h3v1h-3zM90 8h1v1h-1zM101 8h3v1h-3zM111 8h2v1h-2zM116 8h1v1h-1zM11 9h1v1h-1zM51 9h1v1h-1zM10 10h1v1h-1zM50 10h1v1h-1z"/></svg><div class="ab" style="left:0;top:74px;width:369px;height:26px;border-right:1px solid #A9A7AD;border-bottom:1px solid #A9A7AD;border-bottom-right-radius:2px;background:#EBE9EE"></div><div class="ab" style="left:0;top:100px;width:370px;height:1px;background:#fff"></div><div class="ab" style="left:2px;top:78px"><div style="height:1px;margin-bottom:1px;background:#A5A5AC;width:4px"></div><div style="height:1px;margin-bottom:1px;background:#A5A5AC;width:4px"></div><div style="height:1px;margin-bottom:1px;background:#A5A5AC;width:4px"></div><div style="height:1px;margin-bottom:1px;background:#A5A5AC;width:4px"></div><div style="height:1px;margin-bottom:1px;background:#A5A5AC;width:4px"></div><div style="height:1px;margin-bottom:1px;background:#A5A5AC;width:4px"></div><div style="height:1px;margin-bottom:1px;background:#A5A5AC;width:4px"></div><div style="height:1px;margin-bottom:1px;background:#A5A5AC;width:4px"></div><div style="height:1px;margin-bottom:1px;background:#A5A5AC;width:4px"></div><div style="height:1px;margin-bottom:1px;background:#A5A5AC;width:4px"></div></div><svg class="ab" style="left:0px;top:0px" width="60" height="100" viewBox="0 0 60 100"><path d="M16.5 82v14M14 93.5h13" stroke="#505058" stroke-width="1.3"/><path d="M15 83.5l1.5-2 1.5 2M25.5 92l2 1.5-2 1.5" stroke="#505058" fill="none"/><path d="M22.5 83v8.5M20 91h2.5M22.5 84h3" stroke="#1E3E1E" stroke-width="1.2" fill="none"/></svg><svg class="ab" style="left:0px;top:0px" width="60" height="100" viewBox="0 0 60 100"><path d="M44.5 82v14M42 93.5h13" stroke="#505058" stroke-width="1.3"/><path d="M43 83.5l1.5-2 1.5 2M53.5 92l2 1.5-2 1.5" stroke="#505058" fill="none"/><path d="M50.5 80v12" stroke="#0A5A0A" stroke-width="1.2"/><rect x="48.5" y="82.5" width="4" height="7" fill="#3CD83C" stroke="#0A5A0A"/></svg><div class="ab" style="left:64px;top:75px;width:25px;height:24px;background:#F6F5F8;border-left:1px solid #A8A8AE;border-top:1px solid #A8A8AE;border-right:1px solid #fff;border-bottom:1px solid #fff"></div><svg class="ab" style="left:0px;top:0px" width="90" height="100" viewBox="0 0 90 100"><path d="M72.5 82v14M70 93.5h13" stroke="#505058" stroke-width="1.3"/><path d="M71 83.5l1.5-2 1.5 2M81.5 92l2 1.5-2 1.5" stroke="#505058" fill="none"/><path d="M72.5 90Q75 85 77 85.2T82.5 89.3" stroke="#3A7A3A" stroke-width="1.1" fill="none"/></svg><div class="ab" style="left:94px;top:77px;width:1px;height:20px;background:#B3B1B8"></div><div class="ab" style="left:95px;top:77px;width:1px;height:20px;background:#fff"></div><svg class="ab" style="left:0px;top:0px" width="125" height="100" viewBox="0 0 125 100"><circle cx="109.8" cy="86" r="5.2" fill="#C8E8FA" stroke="#2A6AC0" stroke-width="1.6"/><path d="M107 86h5.6M109.8 83.2v5.6" stroke="#1A5AB0" stroke-width="1.8"/><path d="M113.8 90l5 5" stroke="#B89828" stroke-width="2.8"/><path d="M113.8 90l5 5" stroke="#F0D870" stroke-width="1.2"/></svg><svg class="ab" style="left:0px;top:0px" width="155" height="100" viewBox="0 0 155 100"><circle cx="138" cy="86" r="5.2" fill="#C8E8FA" stroke="#2A6AC0" stroke-width="1.6"/><path d="M135.2 86h5.6" stroke="#1A5AB0" stroke-width="1.8"/><path d="M142 90l5 5" stroke="#B89828" stroke-width="2.8"/><path d="M142 90l5 5" stroke="#F0D870" stroke-width="1.2"/></svg><div class="ab" style="left:158px;top:77px;width:1px;height:20px;background:#B3B1B8"></div><div class="ab" style="left:159px;top:77px;width:1px;height:20px;background:#fff"></div><svg class="ab" style="left:0px;top:0px" width="190" height="100" viewBox="0 0 190 100"><path d="M172.5 82v14M170 93.5h13" stroke="#505058" stroke-width="1.3"/><path d="M171 83.5l1.5-2 1.5 2M181.5 92l2 1.5-2 1.5" stroke="#505058" fill="none"/><path d="M177.5 84.5v6.5l3.5-3.2z" fill="none" stroke="#2AAA2A" stroke-width="1.2"/></svg><svg class="ab" style="left:0px;top:0px" width="215" height="100" viewBox="0 0 215 100"><path d="M200.5 82v14M198 93.5h13" stroke="#505058" stroke-width="1.3"/><path d="M199 83.5l1.5-2 1.5 2M209.5 92l2 1.5-2 1.5" stroke="#505058" fill="none"/><path d="M206.5 82v7.5" stroke="#3A4A5A" stroke-width="1.2"/><path d="M211 87.5h-3.5M209 86l-1.5 1.5 1.5 1.5" stroke="#D03020" fill="none"/></svg><div class="ab" style="left:222px;top:77px;width:1px;height:20px;background:#B3B1B8"></div><div class="ab" style="left:223px;top:77px;width:1px;height:20px;background:#fff"></div><svg class="ab" style="left:0px;top:0px" width="260" height="100" viewBox="0 0 260 100"><path d="M233.5 80.5h7l3 3v10h-10z" fill="#F8F8F8" stroke="#666"/><path d="M235.5 83.5v6" stroke="#555"/><path d="M241 86h4v4h4v4h-4v4h-4v-4h-4v-4h4z" fill="#3EE03E" stroke="#0E6A12" stroke-width="1"/><path d="M251 88h5l-2.5 3z" fill="#000"/></svg><svg class="ab" style="left:0px;top:0px" width="295" height="100" viewBox="0 0 295 100"><circle cx="275" cy="87.8" r="7.2" fill="#F6FAFF" stroke="#1E5EC4" stroke-width="2.2"/><path d="M274.5 83.5v4.5h3" stroke="#222" stroke-width="1.1" fill="none"/><path d="M286 88h5l-2.5 3z" fill="#000"/></svg><svg class="ab" style="left:0px;top:0px" width="322" height="100" viewBox="0 0 322 100"><rect x="303.5" y="81.5" width="14" height="13" fill="#F4F8FC" stroke="#3A66A8"/><path d="M303 81.5h15" stroke="#3A66A8" stroke-width="1.5"/><path d="M307.5 92v-4M309.5 90v-5M313.5 84v1M313.5 87v1M313.5 90v1" stroke="#445" stroke-width="1"/></svg><div class="ab" style="left:328px;top:77px;width:1px;height:20px;background:#B3B1B8"></div><div class="ab" style="left:329px;top:77px;width:1px;height:20px;background:#fff"></div><svg class="ab" style="left:0px;top:0px" width="365" height="100" viewBox="0 0 365 100"><rect x="338.5" y="81.5" width="15" height="13" fill="#F4F8FC" stroke="#3A66A8"/><rect x="339" y="82" width="14" height="2" fill="#3A66A8"/><path d="M340 88q3-2 5-0.5t7-1" stroke="#C86A20" fill="none"/><path d="M339 88.5h14" stroke="#3A66A8" stroke-width=".8"/><path d="M340 92q3-2 5-0.5t7-1" stroke="#333" fill="none"/><path d="M357 88h5l-2.5 3z" fill="#000"/></svg><div class="ab" style="left:0;top:101px;width:303px;height:26px;border-right:1px solid #A9A7AD;border-bottom:1px solid #A9A7AD;border-bottom-right-radius:2px;background:#EBE9EE"></div><div class="ab" style="left:0;top:127px;width:304px;height:1px;background:#fff"></div><div class="ab" style="left:2px;top:105px"><div style="height:1px;margin-bottom:1px;background:#A5A5AC;width:4px"></div><div style="height:1px;margin-bottom:1px;background:#A5A5AC;width:4px"></div><div style="height:1px;margin-bottom:1px;background:#A5A5AC;width:4px"></div><div style="height:1px;margin-bottom:1px;background:#A5A5AC;width:4px"></div><div style="height:1px;margin-bottom:1px;background:#A5A5AC;width:4px"></div><div style="height:1px;margin-bottom:1px;background:#A5A5AC;width:4px"></div><div style="height:1px;margin-bottom:1px;background:#A5A5AC;width:4px"></div><div style="height:1px;margin-bottom:1px;background:#A5A5AC;width:4px"></div><div style="height:1px;margin-bottom:1px;background:#A5A5AC;width:4px"></div><div style="height:1px;margin-bottom:1px;background:#A5A5AC;width:4px"></div></div><div class="ab" style="left:8px;top:102px;width:25px;height:24px;background:#F6F5F8;border-left:1px solid #A8A8AE;border-top:1px solid #A8A8AE;border-right:1px solid #fff;border-bottom:1px solid #fff"></div><svg class="ab" style="left:0px;top:0px" width="30" height="125" viewBox="0 0 30 125"><path d="M16 107.5V119L18.8 116.3 21 121 23 120 20.8 115.5H24.5Z" fill="#4A4A4A"/></svg><svg class="ab" style="left:0px;top:0px" width="60" height="125" viewBox="0 0 60 125"><path d="M48.5 107v5.5M48.5 116.5v5.5M41 114.5h5.5M50.5 114.5h5.5" stroke="#505058" stroke-width="1.1"/></svg><div class="ab" style="left:66px;top:104px;width:1px;height:20px;background:#B3B1B8"></div><div class="ab" style="left:67px;top:104px;width:1px;height:20px;background:#fff"></div><div class="ab" style="left:84px;top:109px;width:1px;height:11px;background:#505058"></div><div class="ab" style="left:107px;top:114px;width:12px;height:1px;background:#505058"></div><svg class="ab" style="left:0px;top:0px" width="150" height="125" viewBox="0 0 150 125"><path d="M134.5 120.5L146.5 108.5" stroke="#505058" stroke-width="1.1"/></svg><svg class="ab" style="left:0px;top:0px" width="180" height="125" viewBox="0 0 180 125"><path d="M160.5 117L172 107.5M162.5 120.5L174.5 110.5M163 110.5v6M166 108.5v6M169 106.5v6" stroke="#505058" stroke-width="1" fill="none"/><text x="171.5" y="124" font-size="6.5" font-weight="bold" font-family="Liberation Sans" fill="#333">E</text></svg><svg class="ab" style="left:0px;top:0px" width="208" height="125" viewBox="0 0 208 125"><path d="M190 108.5h13M190 111.5h13M190 115.5h13M190 118.5h9" stroke="#606068" stroke-dasharray="1 1"/><text x="199.5" y="124.5" font-size="6.5" font-weight="bold" font-family="Liberation Sans" fill="#333">F</text></svg><svg class="ab" style="left:0px;top:0px" width="232" height="125" viewBox="0 0 232 125"><path d="M221.5 119.5L224.8 110.8 228 119.5M222.7 116.5h4.3" stroke="#5A5A60" stroke-width="1.6" fill="none"/></svg><svg class="ab" style="left:0px;top:0px" width="262" height="125" viewBox="0 0 262 125"><rect x="247.5" y="109.5" width="11" height="12" fill="none" stroke="#505058" stroke-dasharray="1 1"/><rect x="246" y="108" width="2" height="2" fill="#505058"/><path d="M249.5 112h7M253 112v7.5" stroke="#505058" stroke-width="1.8"/></svg><svg class="ab" style="left:0px;top:0px" width="300" height="125" viewBox="0 0 300 125"><path d="M277.8 109.5l2.5 2.2-2.5 2.2-2.5-2.2z M284.8 116.5l2.5 2.2-2.5 2.2-2.5-2.2z" fill="#444"/><path d="M276.5 114.5l2.2 2.6 4.5-2.3" stroke="#444" stroke-width="1.3" fill="none"/><path d="M291 114h5l-2.5 3z" fill="#000"/></svg><div class="ab" style="left:0;top:128px;width:260px;height:26px;border-right:1px solid #A9A7AD;border-bottom:1px solid #A9A7AD;border-bottom-right-radius:2px;background:#EBE9EE"></div><div class="ab" style="left:0;top:154px;width:261px;height:1px;background:#fff"></div><div class="ab" style="left:2px;top:132px"><div style="height:1px;margin-bottom:1px;background:#A5A5AC;width:4px"></div><div style="height:1px;margin-bottom:1px;background:#A5A5AC;width:4px"></div><div style="height:1px;margin-bottom:1px;background:#A5A5AC;width:4px"></div><div style="height:1px;margin-bottom:1px;background:#A5A5AC;width:4px"></div><div style="height:1px;margin-bottom:1px;background:#A5A5AC;width:4px"></div><div style="height:1px;margin-bottom:1px;background:#A5A5AC;width:4px"></div><div style="height:1px;margin-bottom:1px;background:#A5A5AC;width:4px"></div><div style="height:1px;margin-bottom:1px;background:#A5A5AC;width:4px"></div><div style="height:1px;margin-bottom:1px;background:#A5A5AC;width:4px"></div><div style="height:1px;margin-bottom:1px;background:#A5A5AC;width:4px"></div></div><div class="ab" style="left:120px;top:129px;width:25px;height:24px;background:#F6F5F8;border-left:1px solid #A8A8AE;border-top:1px solid #A8A8AE;border-right:1px solid #fff;border-bottom:1px solid #fff"></div><div class="t" style="left:14px;top:138px;font-size:10.5px;letter-spacing:-0.3px;color:#3A3A3A">M1</div><div class="t" style="left:41px;top:138px;font-size:10.5px;letter-spacing:-0.3px;color:#3A3A3A">M5</div><div class="t" style="left:67.5px;top:138px;font-size:10.5px;letter-spacing:-0.3px;color:#3A3A3A">M15</div><div class="t" style="left:96px;top:138px;font-size:10.5px;letter-spacing:-0.3px;color:#3A3A3A">M30</div><div class="t" style="left:126.5px;top:138px;font-size:10.5px;letter-spacing:-0.3px;color:#3A3A3A">H1</div><div class="t" style="left:153.5px;top:138px;font-size:10.5px;letter-spacing:-0.3px;color:#3A3A3A">H4</div><div class="t" style="left:182.5px;top:138px;font-size:10.5px;letter-spacing:-0.3px;color:#3A3A3A">D1</div><div class="t" style="left:210px;top:138px;font-size:10.5px;letter-spacing:-0.3px;color:#3A3A3A">W1</div><div class="t" style="left:236px;top:138px;font-size:10.5px;letter-spacing:-0.3px;color:#3A3A3A">MN</div><div class="ab" style="left:0;top:155px;width:188px;height:594px;background:#EBE9EE;border-right:1px solid #A3A1A8;border-bottom:1px solid #A3A1A8;box-shadow:inset -1px -1px 0 #D0CED4"></div><div class="ab" style="left:3px;top:726px;width:1px;height:19px;background:#B8B6BC"></div><div class="ab" style="left:0;top:153px;width:1280px;height:1px;background:#F6F5F8"></div><div class="ab" style="left:0;top:154px;width:1280px;height:1px;background:#B4B2B8"></div><div class="ab" style="left:0;top:155px;width:1280px;height:1px;background:#8E8C92"></div><div class="ab" style="left:0;top:155px;width:187px;height:1px;background:#FAFAFC"></div><div class="ab" style="left:3px;top:156px;width:167px;height:14px;background:linear-gradient(90deg,#6E9EDC,#70A2DE 50%,#78AEE6)"></div><div class="ab" style="left:0;top:171px;width:184px;height:1px;background:#A8A8B0"></div><svg width="113" height="12" style="position:absolute;left:9px;top:157px" fill="#fff" shape-rendering="crispEdges"><path d="M75 0h1v1h-1zM78 0h1v1h-1zM99 0h1v1h-1zM76 1h1v1h-1zM0 2h1v1h-1zM5 2h1v1h-1zM7 2h1v1h-1zM16 2h1v1h-1zM26 2h1v1h-1zM31 2h1v1h-1zM36 2h1v1h-1zM42 2h1v1h-1zM54 2h1v1h-1zM76 2h1v1h-1zM94 2h1v1h-1zM40 3h1v1h-1zM55 3h2v1h-2zM76 3h1v1h-1zM95 3h1v1h-1zM4 4h1v1h-1zM9 4h1v1h-1zM20 4h1v1h-1zM25 4h1v1h-1zM35 4h1v1h-1zM57 4h1v1h-1zM76 4h1v1h-1zM97 4h1v1h-1zM38 5h1v1h-1zM41 5h1v1h-1zM55 5h1v1h-1zM62 5h1v1h-1zM72 5h1v1h-1zM76 5h1v1h-1zM88 5h1v1h-1zM91 5h1v1h-1zM110 5h2v1h-2zM1 6h1v1h-1zM8 6h1v1h-1zM17 6h1v1h-1zM22 6h1v1h-1zM32 6h1v1h-1zM51 6h1v1h-1zM63 6h1v1h-1zM72 6h1v1h-1zM76 6h1v1h-1zM109 6h1v1h-1zM1 7h1v1h-1zM8 7h1v1h-1zM17 7h1v1h-1zM22 7h1v1h-1zM32 7h1v1h-1zM50 7h1v1h-1zM61 7h1v1h-1zM76 7h1v1h-1zM84 7h1v1h-1zM86 7h1v1h-1zM92 7h1v1h-1zM95 7h1v1h-1zM97 7h1v1h-1zM105 7h1v1h-1zM110 7h1v1h-1zM1 8h1v1h-1zM8 8h1v1h-1zM17 8h1v1h-1zM22 8h1v1h-1zM32 8h1v1h-1zM57 8h1v1h-1zM50 9h1v1h-1zM63 9h1v1h-1zM104 9h1v1h-1zM106 9h1v1h-1zM110 9h2v1h-2zM58 10h2v1h-2zM101 10h1v1h-1zM105 10h1v1h-1zM52 11h2v1h-2zM58 11h1v1h-1zM61 11h1v1h-1zM101 11h1v1h-1zM103 11h1v1h-1z" fill-opacity="0.25"/><path d="M21 2h1v1h-1zM37 2h2v1h-2zM55 2h2v1h-2zM95 2h2v1h-2zM2 3h2v1h-2zM14 3h1v1h-1zM18 3h2v1h-2zM23 3h2v1h-2zM29 3h1v1h-1zM33 3h2v1h-2zM48 3h1v1h-1zM86 3h1v1h-1zM3 4h1v1h-1zM19 4h1v1h-1zM24 4h1v1h-1zM34 4h1v1h-1zM39 4h3v1h-3zM54 4h1v1h-1zM1 5h2v1h-2zM8 5h2v1h-2zM17 5h2v1h-2zM22 5h2v1h-2zM32 5h2v1h-2zM56 5h2v1h-2zM61 5h1v1h-1zM86 5h1v1h-1zM97 5h1v1h-1zM54 6h1v1h-1zM65 6h2v1h-2zM68 6h2v1h-2zM86 6h1v1h-1zM88 6h1v1h-1zM97 6h1v1h-1zM105 6h2v1h-2zM56 7h2v1h-2zM62 7h2v1h-2zM72 7h1v1h-1zM14 8h1v1h-1zM29 8h1v1h-1zM39 8h2v1h-2zM48 8h1v1h-1zM50 8h2v1h-2zM60 8h1v1h-1zM85 8h3v1h-3zM96 8h1v1h-1zM105 8h1v1h-1zM56 9h1v1h-1zM55 10h1v1h-1zM60 10h1v1h-1zM62 10h1v1h-1zM102 10h1v1h-1zM60 11h1v1h-1zM102 11h1v1h-1z" fill-opacity="0.50"/><path d="M75 1h1v1h-1zM1 2h1v1h-1zM4 2h1v1h-1zM8 2h1v1h-1zM17 2h1v1h-1zM20 2h1v1h-1zM22 2h1v1h-1zM25 2h1v1h-1zM32 2h1v1h-1zM35 2h1v1h-1zM41 2h1v1h-1zM75 2h1v1h-1zM13 3h1v1h-1zM28 3h1v1h-1zM47 3h1v1h-1zM75 3h1v1h-1zM87 3h1v1h-1zM1 4h2v1h-2zM8 4h1v1h-1zM17 4h2v1h-2zM22 4h2v1h-2zM32 4h2v1h-2zM38 4h1v1h-1zM75 4h1v1h-1zM94 4h2v1h-2zM39 5h2v1h-2zM54 5h1v1h-1zM71 5h1v1h-1zM75 5h1v1h-1zM96 5h1v1h-1zM2 6h1v1h-1zM9 6h1v1h-1zM18 6h1v1h-1zM23 6h1v1h-1zM33 6h1v1h-1zM56 6h2v1h-2zM60 6h2v1h-2zM71 6h1v1h-1zM75 6h1v1h-1zM85 6h1v1h-1zM87 6h1v1h-1zM94 6h2v1h-2zM111 6h2v1h-2zM2 7h1v1h-1zM9 7h1v1h-1zM18 7h1v1h-1zM23 7h1v1h-1zM33 7h1v1h-1zM39 7h2v1h-2zM51 7h1v1h-1zM65 7h2v1h-2zM68 7h2v1h-2zM71 7h1v1h-1zM75 7h1v1h-1zM85 7h1v1h-1zM87 7h2v1h-2zM106 7h1v1h-1zM109 7h1v1h-1zM2 8h1v1h-1zM9 8h1v1h-1zM13 8h1v1h-1zM18 8h1v1h-1zM23 8h1v1h-1zM28 8h1v1h-1zM33 8h1v1h-1zM47 8h1v1h-1zM56 8h1v1h-1zM65 8h2v1h-2zM68 8h2v1h-2zM71 8h2v1h-2zM75 8h1v1h-1zM88 8h1v1h-1zM91 8h1v1h-1zM95 8h1v1h-1zM109 8h1v1h-1zM111 8h2v1h-2zM51 9h1v1h-1zM55 9h1v1h-1zM62 9h1v1h-1zM51 10h3v1h-3zM61 10h1v1h-1zM91 10h1v1h-1zM103 10h1v1h-1zM59 11h1v1h-1z" fill-opacity="0.75"/><path d="M78 1h1v1h-1zM99 1h1v1h-1zM78 2h1v1h-1zM99 2h1v1h-1zM1 3h1v1h-1zM4 3h1v1h-1zM8 3h1v1h-1zM17 3h1v1h-1zM20 3h1v1h-1zM22 3h1v1h-1zM25 3h1v1h-1zM32 3h1v1h-1zM35 3h1v1h-1zM38 3h1v1h-1zM41 3h1v1h-1zM78 3h1v1h-1zM99 3h1v1h-1zM55 4h2v1h-2zM78 4h1v1h-1zM96 4h1v1h-1zM99 4h1v1h-1zM78 5h1v1h-1zM87 5h1v1h-1zM94 5h1v1h-1zM99 5h1v1h-1zM39 6h2v1h-2zM55 6h1v1h-1zM62 6h1v1h-1zM78 6h1v1h-1zM91 6h1v1h-1zM96 6h1v1h-1zM99 6h1v1h-1zM110 6h1v1h-1zM60 7h1v1h-1zM78 7h1v1h-1zM91 7h1v1h-1zM96 7h1v1h-1zM99 7h1v1h-1zM112 7h1v1h-1zM61 8h4v1h-4zM67 8h1v1h-1zM70 8h1v1h-1zM73 8h2v1h-2zM78 8h1v1h-1zM89 8h2v1h-2zM92 8h3v1h-3zM99 8h1v1h-1zM106 8h3v1h-3zM110 8h1v1h-1zM105 9h1v1h-1zM54 10h1v1h-1zM104 10h1v1h-1z"/></svg><svg class="ab" style="left:174px;top:160px" width="8" height="7" viewBox="0 0 8 7"><path d="M1.2 1.2L6.8 5.8M6.8 1.2L1.2 5.8" stroke="#000" stroke-width="1.7"/></svg><div class="ab" style="left:3px;top:172px;width:164px;height:553px;background:#fff;border-left:1px solid #A0A0A8"></div><div class="ab" style="left:4px;top:172px;width:163px;height:20px;background:linear-gradient(#FDFDFE,#F4F3F6)"></div><div class="ab" style="left:72px;top:175px;width:1px;height:14px;background:#D8D7DC"></div><div class="ab" style="left:118px;top:175px;width:1px;height:14px;background:#D8D7DC"></div><svg width="18" height="8" style="position:absolute;left:7px;top:180px" fill="#000" shape-rendering="crispEdges"><path d="M5 0h1v1h-1zM9 1h2v1h-2zM8 2h1v1h-1zM4 3h1v1h-1zM9 3h1v1h-1zM16 3h1v1h-1zM3 5h1v1h-1zM5 5h1v1h-1zM9 5h2v1h-2zM15 5h1v1h-1zM17 5h1v1h-1zM0 6h1v1h-1zM4 6h1v1h-1zM12 6h1v1h-1zM16 6h1v1h-1zM0 7h1v1h-1zM2 7h1v1h-1zM12 7h1v1h-1zM14 7h1v1h-1z" fill-opacity="0.25"/><path d="M4 0h1v1h-1zM4 2h2v1h-2zM16 2h2v1h-2zM4 4h1v1h-1zM16 4h2v1h-2zM1 6h1v1h-1zM13 6h1v1h-1zM1 7h1v1h-1zM13 7h1v1h-1z" fill-opacity="0.50"/><path d="M10 2h2v1h-2zM5 3h1v1h-1zM8 3h1v1h-1zM17 3h1v1h-1zM8 4h1v1h-1zM10 4h2v1h-2zM2 6h1v1h-1zM14 6h1v1h-1z" fill-opacity="0.75"/><path d="M9 2h1v1h-1zM11 3h1v1h-1zM5 4h3v1h-3zM9 4h1v1h-1zM4 5h1v1h-1zM16 5h1v1h-1zM3 6h1v1h-1zM15 6h1v1h-1z"/></svg><svg width="24" height="9" style="position:absolute;left:90px;top:176px" fill="#000" shape-rendering="crispEdges"><path d="M6 0h1v1h-1zM10 0h1v1h-1zM11 1h1v1h-1zM11 2h1v1h-1zM2 3h2v1h-2zM11 3h1v1h-1zM22 3h1v1h-1zM11 4h1v1h-1zM21 4h1v1h-1zM11 5h1v1h-1zM4 6h1v1h-1zM15 6h1v1h-1zM21 6h1v1h-1zM23 6h1v1h-1zM7 7h1v1h-1zM14 7h1v1h-1zM19 7h1v1h-1z" fill-opacity="0.25"/><path d="M20 3h1v1h-1zM3 4h1v1h-1zM19 4h1v1h-1zM13 5h1v1h-1zM16 5h1v1h-1zM3 6h1v1h-1zM11 6h1v1h-1zM13 6h1v1h-1zM20 6h1v1h-1zM22 6h1v1h-1zM1 7h1v1h-1zM12 7h1v1h-1zM22 7h1v1h-1zM1 8h1v1h-1zM6 8h1v1h-1zM8 8h1v1h-1zM15 8h1v1h-1zM20 8h1v1h-1z" fill-opacity="0.50"/><path d="M10 1h1v1h-1zM10 2h1v1h-1zM10 3h1v1h-1zM21 3h1v1h-1zM1 4h2v1h-2zM10 4h1v1h-1zM20 4h1v1h-1zM10 5h1v1h-1zM15 5h1v1h-1zM19 5h1v1h-1zM1 6h2v1h-2zM10 6h1v1h-1zM12 6h1v1h-1zM19 6h1v1h-1zM3 7h1v1h-1zM10 7h1v1h-1zM15 7h1v1h-1zM14 8h1v1h-1zM16 8h1v1h-1zM19 8h1v1h-1z" fill-opacity="0.75"/><path d="M6 1h1v1h-1zM6 2h1v1h-1zM6 3h1v1h-1zM6 4h1v1h-1zM1 5h1v1h-1zM6 5h1v1h-1zM14 5h1v1h-1zM6 6h1v1h-1zM16 6h1v1h-1zM2 7h1v1h-1zM6 7h1v1h-1zM11 7h1v1h-1zM16 7h1v1h-1zM20 7h2v1h-2zM7 8h1v1h-1zM9 8h5v1h-5zM17 8h2v1h-2z"/></svg><svg width="26" height="12" style="position:absolute;left:134px;top:176px" fill="#000" shape-rendering="crispEdges"><path d="M6 0h1v1h-1zM9 0h1v1h-1zM13 3h1v1h-1zM12 4h1v1h-1zM14 4h1v1h-1zM14 5h1v1h-1zM25 5h1v1h-1zM15 6h1v1h-1zM25 6h1v1h-1zM13 7h1v1h-1zM25 7h1v1h-1zM0 8h1v1h-1zM3 9h1v1h-1zM6 9h1v1h-1zM15 9h1v1h-1zM1 10h1v1h-1zM10 10h2v1h-2zM10 11h1v1h-1zM13 11h1v1h-1z" fill-opacity="0.25"/><path d="M13 2h1v1h-1zM12 3h1v1h-1zM13 5h1v1h-1zM18 6h2v1h-2zM21 6h2v1h-2zM1 7h1v1h-1zM14 7h2v1h-2zM5 8h1v1h-1zM12 8h1v1h-1zM2 9h1v1h-1zM4 9h1v1h-1zM2 10h1v1h-1zM4 10h1v1h-1zM12 10h1v1h-1zM14 10h1v1h-1zM12 11h1v1h-1z" fill-opacity="0.50"/><path d="M13 4h1v1h-1zM24 5h1v1h-1zM12 6h2v1h-2zM24 6h1v1h-1zM18 7h2v1h-2zM21 7h2v1h-2zM24 7h1v1h-1zM1 8h1v1h-1zM6 8h1v1h-1zM16 8h1v1h-1zM18 8h2v1h-2zM21 8h2v1h-2zM24 8h1v1h-1zM14 9h1v1h-1zM3 10h1v1h-1zM13 10h1v1h-1zM11 11h1v1h-1z" fill-opacity="0.75"/><path d="M6 1h1v1h-1zM9 1h1v1h-1zM6 2h1v1h-1zM9 2h1v1h-1zM6 3h1v1h-1zM9 3h1v1h-1zM6 4h1v1h-1zM9 4h1v1h-1zM6 5h1v1h-1zM9 5h1v1h-1zM6 6h1v1h-1zM9 6h1v1h-1zM14 6h1v1h-1zM6 7h1v1h-1zM9 7h1v1h-1zM12 7h1v1h-1zM9 8h1v1h-1zM13 8h3v1h-3zM17 8h1v1h-1zM20 8h1v1h-1zM23 8h1v1h-1zM1 9h1v1h-1zM5 9h1v1h-1z"/></svg><div class="ab" style="left:4px;top:192px;width:163px;height:533px;overflow:hidden"><div class="ab" style="left:0;top:0px;width:163px;height:20px;background:#FFFCEF;border-top:1px solid #CFCEC8"></div><div class="ab" style="left:68px;top:0px;width:1px;height:20px;background:#D0D0CC"></div><div class="ab" style="left:114px;top:0px;width:1px;height:20px;background:#D0D0CC"></div><svg class="ab" style="left:4px;top:4px" width="11" height="11" viewBox="0 0 11 11"><path d="M3 0.5h5v4h2.5L5.5 9.5 0.5 4.5H3z" fill="#F07A3A" stroke="#B8401A" stroke-width=".8"/></svg><div class="t" style="left:19px;top:5px;font-size:11px;letter-spacing:-0.85px;color:#000">USDCHF</div><div class="t" style="right:52px;top:5px;font-size:11px;color:#A80C18">1.1527</div><div class="t" style="right:6px;top:5px;font-size:11px;color:#A80C18">1.1530</div><div class="ab" style="left:0;top:20px;width:163px;height:20px;background:#3A69BE;border-top:1px solid #3A69BE"></div><div class="ab" style="left:68px;top:20px;width:1px;height:20px;background:#C8D8F8"></div><div class="ab" style="left:114px;top:20px;width:1px;height:20px;background:#C8D8F8"></div><svg class="ab" style="left:4px;top:24px" width="11" height="11" viewBox="0 0 11 11"><path d="M3 0.5h5v4h2.5L5.5 9.5 0.5 4.5H3z" fill="#F07A3A" stroke="#B8401A" stroke-width=".8"/></svg><div class="t" style="left:19px;top:25px;font-size:11px;letter-spacing:-0.85px;color:#fff">GBPUSD</div><div class="t" style="right:52px;top:25px;font-size:11px;color:#fff">2.0799</div><div class="t" style="right:6px;top:25px;font-size:11px;color:#fff">2.0802</div><div class="ab" style="left:0;top:40px;width:163px;height:20px;background:#F2FAF1;border-top:1px solid #CFCEC8"></div><div class="ab" style="left:68px;top:40px;width:1px;height:20px;background:#D0D0CC"></div><div class="ab" style="left:114px;top:40px;width:1px;height:20px;background:#D0D0CC"></div><svg class="ab" style="left:4px;top:44px" width="11" height="11" viewBox="0 0 11 11"><path d="M3 0.5h5v4h2.5L5.5 9.5 0.5 4.5H3z" fill="#F07A3A" stroke="#B8401A" stroke-width=".8"/></svg><div class="t" style="left:19px;top:45px;font-size:11px;letter-spacing:-0.85px;color:#000">EURUSD</div><div class="t" style="right:52px;top:45px;font-size:11px;color:#A80C18">1.4467</div><div class="t" style="right:6px;top:45px;font-size:11px;color:#A80C18">1.4469</div><div class="ab" style="left:0;top:60px;width:163px;height:20px;background:#FDFDF2;border-top:1px solid #CFCEC8"></div><div class="ab" style="left:68px;top:60px;width:1px;height:20px;background:#D0D0CC"></div><div class="ab" style="left:114px;top:60px;width:1px;height:20px;background:#D0D0CC"></div><svg class="ab" style="left:4px;top:64px" width="11" height="11" viewBox="0 0 11 11"><path d="M3 9.5h5v-4h2.5L5.5 0.5 0.5 5.5H3z" fill="#4CCB4C" stroke="#1A8A1A" stroke-width=".8"/></svg><div class="t" style="left:19px;top:65px;font-size:11px;letter-spacing:-0.85px;color:#000">USDJPY</div><div class="t" style="right:52px;top:65px;font-size:11px;color:#12128C">114.26</div><div class="t" style="right:6px;top:65px;font-size:11px;color:#12128C">114.28</div><div class="ab" style="left:0;top:80px;width:163px;height:20px;background:#EFF3FD;border-top:1px solid #CFCEC8"></div><div class="ab" style="left:68px;top:80px;width:1px;height:20px;background:#D0D0CC"></div><div class="ab" style="left:114px;top:80px;width:1px;height:20px;background:#D0D0CC"></div><svg class="ab" style="left:4px;top:84px" width="11" height="11" viewBox="0 0 11 11"><path d="M3 0.5h5v4h2.5L5.5 9.5 0.5 4.5H3z" fill="#F07A3A" stroke="#B8401A" stroke-width=".8"/></svg><div class="t" style="left:19px;top:85px;font-size:11px;letter-spacing:-0.85px;color:#000">AUDUSD</div><div class="t" style="right:52px;top:85px;font-size:11px;color:#A80C18">0.9202</div><div class="t" style="right:6px;top:85px;font-size:11px;color:#A80C18">0.9204</div><div class="ab" style="left:0;top:100px;width:163px;height:20px;background:#FDFCEE;border-top:1px solid #CFCEC8"></div><div class="ab" style="left:68px;top:100px;width:1px;height:20px;background:#D0D0CC"></div><div class="ab" style="left:114px;top:100px;width:1px;height:20px;background:#D0D0CC"></div><svg class="ab" style="left:4px;top:104px" width="11" height="11" viewBox="0 0 11 11"><path d="M3 9.5h5v-4h2.5L5.5 0.5 0.5 5.5H3z" fill="#4CCB4C" stroke="#1A8A1A" stroke-width=".8"/></svg><div class="t" style="left:19px;top:105px;font-size:11px;letter-spacing:-0.85px;color:#000">USDCAD</div><div class="t" style="right:52px;top:105px;font-size:11px;color:#12128C">0.9334</div><div class="t" style="right:6px;top:105px;font-size:11px;color:#12128C">0.9338</div><div class="ab" style="left:0;top:120px;width:163px;height:20px;background:#FEFEFA;border-top:1px solid #CFCEC8"></div><div class="ab" style="left:68px;top:120px;width:1px;height:20px;background:#D0D0CC"></div><div class="ab" style="left:114px;top:120px;width:1px;height:20px;background:#D0D0CC"></div><svg class="ab" style="left:4px;top:124px" width="11" height="11" viewBox="0 0 11 11"><path d="M3 0.5h5v4h2.5L5.5 9.5 0.5 4.5H3z" fill="#F07A3A" stroke="#B8401A" stroke-width=".8"/></svg><div class="t" style="left:19px;top:125px;font-size:11px;letter-spacing:-0.85px;color:#000">FDAX</div><div class="t" style="right:52px;top:125px;font-size:11px;color:#A80C18">7840</div><div class="t" style="right:6px;top:125px;font-size:11px;color:#A80C18">7841</div><div class="ab" style="left:0;top:140px;width:163px;height:20px;background:#F1F9F0;border-top:1px solid #CFCEC8"></div><div class="ab" style="left:68px;top:140px;width:1px;height:20px;background:#D0D0CC"></div><div class="ab" style="left:114px;top:140px;width:1px;height:20px;background:#D0D0CC"></div><svg class="ab" style="left:4px;top:144px" width="11" height="11" viewBox="0 0 11 11"><path d="M3 0.5h5v4h2.5L5.5 9.5 0.5 4.5H3z" fill="#F07A3A" stroke="#B8401A" stroke-width=".8"/></svg><div class="t" style="left:19px;top:145px;font-size:11px;letter-spacing:-0.85px;color:#000">EURAUD</div><div class="t" style="right:52px;top:145px;font-size:11px;color:#A80C18">1.5716</div><div class="t" style="right:6px;top:145px;font-size:11px;color:#A80C18">1.5723</div><div class="ab" style="left:0;top:160px;width:163px;height:20px;background:#F1F9F0;border-top:1px solid #CFCEC8"></div><div class="ab" style="left:68px;top:160px;width:1px;height:20px;background:#D0D0CC"></div><div class="ab" style="left:114px;top:160px;width:1px;height:20px;background:#D0D0CC"></div><svg class="ab" style="left:4px;top:164px" width="11" height="11" viewBox="0 0 11 11"><path d="M3 0.5h5v4h2.5L5.5 9.5 0.5 4.5H3z" fill="#F07A3A" stroke="#B8401A" stroke-width=".8"/></svg><div class="t" style="left:19px;top:165px;font-size:11px;letter-spacing:-0.85px;color:#000">EURCHF</div><div class="t" style="right:52px;top:165px;font-size:11px;color:#A80C18">1.6680</div><div class="t" style="right:6px;top:165px;font-size:11px;color:#A80C18">1.6682</div><div class="ab" style="left:0;top:180px;width:163px;height:20px;background:#F1F9F0;border-top:1px solid #CFCEC8"></div><div class="ab" style="left:68px;top:180px;width:1px;height:20px;background:#D0D0CC"></div><div class="ab" style="left:114px;top:180px;width:1px;height:20px;background:#D0D0CC"></div><svg class="ab" style="left:4px;top:184px" width="11" height="11" viewBox="0 0 11 11"><path d="M3 0.5h5v4h2.5L5.5 9.5 0.5 4.5H3z" fill="#F07A3A" stroke="#B8401A" stroke-width=".8"/></svg><div class="t" style="left:19px;top:185px;font-size:11px;letter-spacing:-0.85px;color:#000">EURGBP</div><div class="t" style="right:52px;top:185px;font-size:11px;color:#A80C18">0.6955</div><div class="t" style="right:6px;top:185px;font-size:11px;color:#A80C18">0.6957</div><div class="ab" style="left:0;top:200px;width:163px;height:20px;background:#F1F9F0;border-top:1px solid #CFCEC8"></div><div class="ab" style="left:68px;top:200px;width:1px;height:20px;background:#D0D0CC"></div><div class="ab" style="left:114px;top:200px;width:1px;height:20px;background:#D0D0CC"></div><svg class="ab" style="left:4px;top:204px" width="11" height="11" viewBox="0 0 11 11"><path d="M3 9.5h5v-4h2.5L5.5 0.5 0.5 5.5H3z" fill="#4CCB4C" stroke="#1A8A1A" stroke-width=".8"/></svg><div class="t" style="left:19px;top:205px;font-size:11px;letter-spacing:-0.85px;color:#000">EURJPY</div><div class="t" style="right:52px;top:205px;font-size:11px;color:#12128C">165.32</div><div class="t" style="right:6px;top:205px;font-size:11px;color:#12128C">165.37</div><div class="ab" style="left:0;top:220px;width:163px;height:20px;background:#F1F9F0;border-top:1px solid #CFCEC8"></div><div class="ab" style="left:68px;top:220px;width:1px;height:20px;background:#D0D0CC"></div><div class="ab" style="left:114px;top:220px;width:1px;height:20px;background:#D0D0CC"></div><svg class="ab" style="left:4px;top:224px" width="11" height="11" viewBox="0 0 11 11"><path d="M3 0.5h5v4h2.5L5.5 9.5 0.5 4.5H3z" fill="#F07A3A" stroke="#B8401A" stroke-width=".8"/></svg><div class="t" style="left:19px;top:225px;font-size:11px;letter-spacing:-0.85px;color:#000">EURCAD</div><div class="t" style="right:52px;top:225px;font-size:11px;color:#A80C18">1.3505</div><div class="t" style="right:6px;top:225px;font-size:11px;color:#A80C18">1.3515</div><div class="ab" style="left:0;top:240px;width:163px;height:20px;background:#FDEFF2;border-top:1px solid #CFCEC8"></div><div class="ab" style="left:68px;top:240px;width:1px;height:20px;background:#D0D0CC"></div><div class="ab" style="left:114px;top:240px;width:1px;height:20px;background:#D0D0CC"></div><svg class="ab" style="left:4px;top:244px" width="11" height="11" viewBox="0 0 11 11"><path d="M3 0.5h5v4h2.5L5.5 9.5 0.5 4.5H3z" fill="#F07A3A" stroke="#B8401A" stroke-width=".8"/></svg><div class="t" style="left:19px;top:245px;font-size:11px;letter-spacing:-0.85px;color:#000">GBPCHF</div><div class="t" style="right:52px;top:245px;font-size:11px;color:#A80C18">2.3976</div><div class="t" style="right:6px;top:245px;font-size:11px;color:#A80C18">2.3984</div><div class="ab" style="left:0;top:260px;width:163px;height:20px;background:#FDEFF2;border-top:1px solid #CFCEC8"></div><div class="ab" style="left:68px;top:260px;width:1px;height:20px;background:#D0D0CC"></div><div class="ab" style="left:114px;top:260px;width:1px;height:20px;background:#D0D0CC"></div><svg class="ab" style="left:4px;top:264px" width="11" height="11" viewBox="0 0 11 11"><path d="M3 9.5h5v-4h2.5L5.5 0.5 0.5 5.5H3z" fill="#4CCB4C" stroke="#1A8A1A" stroke-width=".8"/></svg><div class="t" style="left:19px;top:265px;font-size:11px;letter-spacing:-0.85px;color:#000">GBPJPY</div><div class="t" style="right:52px;top:265px;font-size:11px;color:#12128C">237.68</div><div class="t" style="right:6px;top:265px;font-size:11px;color:#12128C">237.76</div><div class="ab" style="left:0;top:280px;width:163px;height:20px;background:#FDEFF2;border-top:1px solid #CFCEC8"></div><div class="ab" style="left:68px;top:280px;width:1px;height:20px;background:#D0D0CC"></div><div class="ab" style="left:114px;top:280px;width:1px;height:20px;background:#D0D0CC"></div><svg class="ab" style="left:4px;top:284px" width="11" height="11" viewBox="0 0 11 11"><path d="M3 0.5h5v4h2.5L5.5 9.5 0.5 4.5H3z" fill="#F07A3A" stroke="#B8401A" stroke-width=".8"/></svg><div class="t" style="left:19px;top:285px;font-size:11px;letter-spacing:-0.85px;color:#000">GBPAUD</div><div class="t" style="right:52px;top:285px;font-size:11px;color:#A80C18">2.2595</div><div class="t" style="right:6px;top:285px;font-size:11px;color:#A80C18">2.2603</div><div class="ab" style="left:0;top:300px;width:163px;height:20px;background:#FDEFF2;border-top:1px solid #CFCEC8"></div><div class="ab" style="left:68px;top:300px;width:1px;height:20px;background:#D0D0CC"></div><div class="ab" style="left:114px;top:300px;width:1px;height:20px;background:#D0D0CC"></div><svg class="ab" style="left:4px;top:304px" width="11" height="11" viewBox="0 0 11 11"><path d="M3 0.5h5v4h2.5L5.5 9.5 0.5 4.5H3z" fill="#F07A3A" stroke="#B8401A" stroke-width=".8"/></svg><div class="t" style="left:19px;top:305px;font-size:11px;letter-spacing:-0.85px;color:#000">GBPCAD</div><div class="t" style="right:52px;top:305px;font-size:11px;color:#A80C18">1.9414</div><div class="t" style="right:6px;top:305px;font-size:11px;color:#A80C18">1.9422</div><div class="ab" style="left:0;top:320px;width:163px;height:20px;background:#EEF3FC;border-top:1px solid #CFCEC8"></div><div class="ab" style="left:68px;top:320px;width:1px;height:20px;background:#D0D0CC"></div><div class="ab" style="left:114px;top:320px;width:1px;height:20px;background:#D0D0CC"></div><svg class="ab" style="left:4px;top:324px" width="11" height="11" viewBox="0 0 11 11"><path d="M3 9.5h5v-4h2.5L5.5 0.5 0.5 5.5H3z" fill="#4CCB4C" stroke="#1A8A1A" stroke-width=".8"/></svg><div class="t" style="left:19px;top:325px;font-size:11px;letter-spacing:-0.85px;color:#000">AUDNZD</div><div class="t" style="right:52px;top:325px;font-size:11px;color:#12128C">1.1972</div><div class="t" style="right:6px;top:325px;font-size:11px;color:#12128C">1.1982</div><div class="ab" style="left:0;top:340px;width:163px;height:20px;background:#EEF3FC;border-top:1px solid #CFCEC8"></div><div class="ab" style="left:68px;top:340px;width:1px;height:20px;background:#D0D0CC"></div><div class="ab" style="left:114px;top:340px;width:1px;height:20px;background:#D0D0CC"></div><svg class="ab" style="left:4px;top:344px" width="11" height="11" viewBox="0 0 11 11"><path d="M3 9.5h5v-4h2.5L5.5 0.5 0.5 5.5H3z" fill="#4CCB4C" stroke="#1A8A1A" stroke-width=".8"/></svg><div class="t" style="left:19px;top:345px;font-size:11px;letter-spacing:-0.85px;color:#000">AUDJPY</div><div class="t" style="right:52px;top:345px;font-size:11px;color:#12128C">105.16</div><div class="t" style="right:6px;top:345px;font-size:11px;color:#12128C">105.21</div><div class="ab" style="left:0;top:360px;width:163px;height:20px;background:#EEF3FC;border-top:1px solid #CFCEC8"></div><div class="ab" style="left:68px;top:360px;width:1px;height:20px;background:#D0D0CC"></div><div class="ab" style="left:114px;top:360px;width:1px;height:20px;background:#D0D0CC"></div><svg class="ab" style="left:4px;top:364px" width="11" height="11" viewBox="0 0 11 11"><path d="M3 9.5h5v-4h2.5L5.5 0.5 0.5 5.5H3z" fill="#4CCB4C" stroke="#1A8A1A" stroke-width=".8"/></svg><div class="t" style="left:19px;top:365px;font-size:11px;letter-spacing:-0.85px;color:#000">AUDC...</div><div class="t" style="right:52px;top:365px;font-size:11px;color:#12128C">0.8590</div><div class="t" style="right:6px;top:365px;font-size:11px;color:#12128C">0.8597</div><div class="ab" style="left:0;top:380px;width:163px;height:20px;background:#EEF3FC;border-top:1px solid #CFCEC8"></div><div class="ab" style="left:68px;top:380px;width:1px;height:20px;background:#D0D0CC"></div><div class="ab" style="left:114px;top:380px;width:1px;height:20px;background:#D0D0CC"></div><svg class="ab" style="left:4px;top:384px" width="11" height="11" viewBox="0 0 11 11"><path d="M3 9.5h5v-4h2.5L5.5 0.5 0.5 5.5H3z" fill="#4CCB4C" stroke="#1A8A1A" stroke-width=".8"/></svg><div class="t" style="left:19px;top:385px;font-size:11px;letter-spacing:-0.85px;color:#000">AUDCHF</div><div class="t" style="right:52px;top:385px;font-size:11px;color:#12128C">1.0608</div><div class="t" style="right:6px;top:385px;font-size:11px;color:#12128C">1.0616</div><div class="ab" style="left:0;top:400px;width:163px;height:20px;background:#EAEAF6;border-top:1px solid #CFCEC8"></div><div class="ab" style="left:68px;top:400px;width:1px;height:20px;background:#D0D0CC"></div><div class="ab" style="left:114px;top:400px;width:1px;height:20px;background:#D0D0CC"></div><svg class="ab" style="left:4px;top:404px" width="11" height="11" viewBox="0 0 11 11"><path d="M3 0.5h5v4h2.5L5.5 9.5 0.5 4.5H3z" fill="#F07A3A" stroke="#B8401A" stroke-width=".8"/></svg><div class="t" style="left:19px;top:405px;font-size:11px;letter-spacing:-0.85px;color:#000">NZDUSD</div><div class="t" style="right:52px;top:405px;font-size:11px;color:#A80C18">0.7682</div><div class="t" style="right:6px;top:405px;font-size:11px;color:#A80C18">0.7686</div><div class="ab" style="left:0;top:420px;width:163px;height:20px;background:#EAEAF6;border-top:1px solid #CFCEC8"></div><div class="ab" style="left:68px;top:420px;width:1px;height:20px;background:#D0D0CC"></div><div class="ab" style="left:114px;top:420px;width:1px;height:20px;background:#D0D0CC"></div><svg class="ab" style="left:4px;top:424px" width="11" height="11" viewBox="0 0 11 11"><path d="M3 9.5h5v-4h2.5L5.5 0.5 0.5 5.5H3z" fill="#4CCB4C" stroke="#1A8A1A" stroke-width=".8"/></svg><div class="t" style="left:19px;top:425px;font-size:11px;letter-spacing:-0.85px;color:#000">NZDJPY</div><div class="t" style="right:52px;top:425px;font-size:11px;color:#12128C">87.79</div><div class="t" style="right:6px;top:425px;font-size:11px;color:#12128C">87.87</div><div class="ab" style="left:0;top:440px;width:163px;height:20px;background:#EAEAF6;border-top:1px solid #CFCEC8"></div><div class="ab" style="left:68px;top:440px;width:1px;height:20px;background:#D0D0CC"></div><div class="ab" style="left:114px;top:440px;width:1px;height:20px;background:#D0D0CC"></div><svg class="ab" style="left:4px;top:444px" width="11" height="11" viewBox="0 0 11 11"><path d="M3 9.5h5v-4h2.5L5.5 0.5 0.5 5.5H3z" fill="#4CCB4C" stroke="#1A8A1A" stroke-width=".8"/></svg><div class="t" style="left:19px;top:445px;font-size:11px;letter-spacing:-0.85px;color:#000">NZDCHF</div><div class="t" style="right:52px;top:445px;font-size:11px;color:#12128C">0.8855</div><div class="t" style="right:6px;top:445px;font-size:11px;color:#12128C">0.8863</div><div class="ab" style="left:0;top:460px;width:163px;height:20px;background:#FDF7E4;border-top:1px solid #CFCEC8"></div><div class="ab" style="left:68px;top:460px;width:1px;height:20px;background:#D0D0CC"></div><div class="ab" style="left:114px;top:460px;width:1px;height:20px;background:#D0D0CC"></div><svg class="ab" style="left:4px;top:464px" width="11" height="11" viewBox="0 0 11 11"><path d="M3 9.5h5v-4h2.5L5.5 0.5 0.5 5.5H3z" fill="#4CCB4C" stroke="#1A8A1A" stroke-width=".8"/></svg><div class="t" style="left:19px;top:465px;font-size:11px;letter-spacing:-0.85px;color:#000">CADJPY</div><div class="t" style="right:52px;top:465px;font-size:11px;color:#12128C">122.38</div><div class="t" style="right:6px;top:465px;font-size:11px;color:#12128C">122.43</div><div class="ab" style="left:0;top:480px;width:163px;height:20px;background:#FDF7E4;border-top:1px solid #CFCEC8"></div><div class="ab" style="left:68px;top:480px;width:1px;height:20px;background:#D0D0CC"></div><div class="ab" style="left:114px;top:480px;width:1px;height:20px;background:#D0D0CC"></div><svg class="ab" style="left:4px;top:484px" width="11" height="11" viewBox="0 0 11 11"><path d="M3 9.5h5v-4h2.5L5.5 0.5 0.5 5.5H3z" fill="#4CCB4C" stroke="#1A8A1A" stroke-width=".8"/></svg><div class="t" style="left:19px;top:485px;font-size:11px;letter-spacing:-0.85px;color:#000">CADCHF</div><div class="t" style="right:52px;top:485px;font-size:11px;color:#12128C">1.2344</div><div class="t" style="right:6px;top:485px;font-size:11px;color:#12128C">1.2354</div><div class="ab" style="left:0;top:500px;width:163px;height:20px;background:#FAF2D2;border-top:1px solid #CFCEC8"></div><div class="ab" style="left:68px;top:500px;width:1px;height:20px;background:#D0D0CC"></div><div class="ab" style="left:114px;top:500px;width:1px;height:20px;background:#D0D0CC"></div><svg class="ab" style="left:4px;top:504px" width="11" height="11" viewBox="0 0 11 11"><path d="M3 9.5h5v-4h2.5L5.5 0.5 0.5 5.5H3z" fill="#4CCB4C" stroke="#1A8A1A" stroke-width=".8"/></svg><div class="t" style="left:19px;top:505px;font-size:11px;letter-spacing:-0.85px;color:#000">CHFJPY</div><div class="t" style="right:52px;top:505px;font-size:11px;color:#12128C">99.11</div><div class="t" style="right:6px;top:505px;font-size:11px;color:#12128C">99.16</div><div class="ab" style="left:0;top:520px;width:163px;height:20px;background:#FDF8DC;border-top:1px solid #CFCEC8"></div><div class="ab" style="left:68px;top:520px;width:1px;height:20px;background:#D0D0CC"></div><div class="ab" style="left:114px;top:520px;width:1px;height:20px;background:#D0D0CC"></div><svg class="ab" style="left:4px;top:524px" width="11" height="11" viewBox="0 0 11 11"><path d="M3 0.5h5v4h2.5L5.5 9.5 0.5 4.5H3z" fill="#F07A3A" stroke="#B8401A" stroke-width=".8"/></svg><div class="t" style="left:19px;top:525px;font-size:11px;letter-spacing:-0.85px;color:#000">XAGUSD</div><div class="t" style="right:52px;top:525px;font-size:11px;color:#A80C18">14.61</div><div class="t" style="right:6px;top:525px;font-size:11px;color:#A80C18">14.68</div></div><div class="ab" style="left:4px;top:725px;width:179px;height:1px;background:#000"></div><div class="ab" style="left:167px;top:172px;width:16px;height:553px;background:linear-gradient(90deg,#FCFCFE,#F0F2F8 60%,#E0E6F0);border-left:1px solid #A8A8B4"></div><div class="ab" style="left:167px;top:189px;width:16px;height:421px;border:1px solid #A4A8B8;border-radius:1px;background:linear-gradient(90deg,#F8FAFE,#E4ECF8 40%,#C8D8F0)"></div><div class="ab" style="left:170px;top:397px;width:8px;height:7px;background:repeating-linear-gradient(#8FA7D6 0 1px,transparent 1px 2px)"></div><div class="ab" style="left:167px;top:172px;width:16px;height:17px;border:1px solid #9A9EAE;border-radius:1px;background:linear-gradient(#F4F8FE,#D4E0F4)"></div><svg class="ab" style="left:169px;top:174px" width="12" height="13" viewBox="0 0 12 13"><path d="M2 9L6 5 10 9" stroke="#4D6185" stroke-width="2" fill="none"/></svg><div class="ab" style="left:167px;top:708px;width:16px;height:17px;border:1px solid #9A9EAE;border-radius:1px;background:linear-gradient(#F4F8FE,#D4E0F4)"></div><svg class="ab" style="left:169px;top:710px" width="12" height="13" viewBox="0 0 12 13"><path d="M2 5L6 9 10 5" stroke="#4D6185" stroke-width="2" fill="none"/></svg><div class="ab" style="left:6px;top:725px;width:39px;height:18px;background:#fff;border:2px solid #000;border-top:none;border-left-width:1px"></div><svg width="21" height="8" style="position:absolute;left:13px;top:732px" fill="#000" shape-rendering="crispEdges"><path d="M12 2h1v1h-1zM15 2h1v1h-1zM5 3h2v1h-2zM13 3h1v1h-1zM20 3h1v1h-1zM15 4h1v1h-1zM8 5h1v1h-1zM13 5h2v1h-2zM0 6h1v1h-1zM5 6h1v1h-1zM9 6h1v1h-1zM15 6h1v1h-1zM0 7h2v1h-2zM5 7h1v1h-1zM7 7h1v1h-1zM15 7h2v1h-2z" fill-opacity="0.25"/><path d="M4 0h1v1h-1zM4 2h1v1h-1zM9 2h1v1h-1zM19 2h1v1h-1zM14 3h2v1h-2zM7 4h1v1h-1zM3 5h1v1h-1zM18 5h1v1h-1zM1 6h1v1h-1zM6 6h1v1h-1zM16 6h1v1h-1zM6 7h1v1h-1z" fill-opacity="0.50"/><path d="M7 2h1v1h-1zM4 3h1v1h-1zM7 3h1v1h-1zM12 3h1v1h-1zM19 3h1v1h-1zM4 4h1v1h-1zM12 4h3v1h-3zM19 4h1v1h-1zM4 5h1v1h-1zM9 5h1v1h-1zM19 5h1v1h-1zM2 6h2v1h-2zM7 6h2v1h-2zM17 6h2v1h-2z" fill-opacity="0.75"/><path d="M8 2h1v1h-1zM13 2h2v1h-2zM9 3h1v1h-1zM8 4h4v1h-4z"/></svg><svg width="89" height="12" style="position:absolute;left:54px;top:729px" fill="#8C8A90" shape-rendering="crispEdges"><path d="M26 0h1v1h-1zM30 0h1v1h-1zM51 0h1v1h-1zM70 0h1v1h-1zM27 1h1v1h-1zM47 1h2v1h-2zM52 1h1v1h-1zM8 2h1v1h-1zM27 2h1v1h-1zM52 2h1v1h-1zM6 3h2v1h-2zM27 3h1v1h-1zM49 3h1v1h-1zM52 3h1v1h-1zM58 3h1v1h-1zM6 4h1v1h-1zM8 4h1v1h-1zM13 4h1v1h-1zM16 4h3v1h-3zM27 4h1v1h-1zM48 4h1v1h-1zM52 4h1v1h-1zM57 4h1v1h-1zM84 4h3v1h-3zM4 5h1v1h-1zM7 5h1v1h-1zM23 5h1v1h-1zM27 5h1v1h-1zM39 5h1v1h-1zM43 5h2v1h-2zM50 5h1v1h-1zM52 5h1v1h-1zM75 5h1v1h-1zM79 5h1v1h-1zM18 6h1v1h-1zM27 6h1v1h-1zM42 6h1v1h-1zM49 6h1v1h-1zM52 6h1v1h-1zM57 6h1v1h-1zM59 6h1v1h-1zM76 6h1v1h-1zM81 6h1v1h-1zM86 6h1v1h-1zM0 7h1v1h-1zM2 7h1v1h-1zM12 7h1v1h-1zM24 7h1v1h-1zM27 7h1v1h-1zM35 7h1v1h-1zM37 7h1v1h-1zM43 7h1v1h-1zM49 7h1v1h-1zM55 7h1v1h-1zM74 7h1v1h-1zM87 7h1v1h-1zM47 8h1v1h-1zM50 8h1v1h-1zM64 8h1v1h-1zM77 8h1v1h-1zM11 9h1v1h-1zM13 9h1v1h-1zM43 9h2v1h-2zM67 9h1v1h-1zM70 9h1v1h-1zM76 9h1v1h-1zM78 9h1v1h-1zM8 10h1v1h-1zM12 10h1v1h-1zM17 10h1v1h-1zM65 10h1v1h-1zM71 10h2v1h-2zM85 10h1v1h-1zM8 11h1v1h-1zM10 11h1v1h-1zM71 11h1v1h-1zM74 11h1v1h-1z" fill-opacity="0.25"/><path d="M7 2h1v1h-1zM2 3h1v1h-1zM22 3h3v1h-3zM37 3h1v1h-1zM48 3h1v1h-1zM56 3h1v1h-1zM12 4h1v1h-1zM55 4h1v1h-1zM79 4h1v1h-1zM2 5h1v1h-1zM20 5h1v1h-1zM37 5h1v1h-1zM74 5h1v1h-1zM88 5h1v1h-1zM2 6h1v1h-1zM4 6h1v1h-1zM12 6h2v1h-2zM37 6h1v1h-1zM39 6h1v1h-1zM56 6h1v1h-1zM58 6h1v1h-1zM17 7h1v1h-1zM19 7h1v1h-1zM52 7h1v1h-1zM58 7h1v1h-1zM65 7h1v1h-1zM75 7h2v1h-2zM81 7h1v1h-1zM85 7h1v1h-1zM1 8h3v1h-3zM7 8h1v1h-1zM12 8h1v1h-1zM17 8h1v1h-1zM20 8h1v1h-1zM36 8h3v1h-3zM56 8h1v1h-1zM69 8h1v1h-1zM73 8h1v1h-1zM76 8h1v1h-1zM80 8h1v1h-1zM85 8h1v1h-1zM66 9h1v1h-1zM68 9h1v1h-1zM9 10h1v1h-1zM18 10h1v1h-1zM66 10h1v1h-1zM68 10h1v1h-1zM73 10h1v1h-1zM75 10h1v1h-1zM86 10h1v1h-1zM9 11h1v1h-1zM73 11h1v1h-1z" fill-opacity="0.50"/><path d="M26 1h1v1h-1zM51 1h1v1h-1zM26 2h1v1h-1zM48 2h1v1h-1zM51 2h1v1h-1zM3 3h1v1h-1zM26 3h1v1h-1zM38 3h1v1h-1zM51 3h1v1h-1zM57 3h1v1h-1zM7 4h1v1h-1zM26 4h1v1h-1zM49 4h1v1h-1zM51 4h1v1h-1zM56 4h1v1h-1zM16 5h4v1h-4zM26 5h1v1h-1zM49 5h1v1h-1zM55 5h1v1h-1zM80 5h1v1h-1zM84 5h4v1h-4zM1 6h1v1h-1zM3 6h1v1h-1zM20 6h1v1h-1zM26 6h1v1h-1zM36 6h1v1h-1zM38 6h1v1h-1zM44 6h2v1h-2zM50 6h1v1h-1zM55 6h1v1h-1zM73 6h2v1h-2zM80 6h1v1h-1zM88 6h1v1h-1zM1 7h1v1h-1zM3 7h2v1h-2zM13 7h1v1h-1zM20 7h1v1h-1zM26 7h1v1h-1zM36 7h1v1h-1zM38 7h2v1h-2zM42 7h1v1h-1zM51 7h1v1h-1zM4 8h1v1h-1zM23 8h1v1h-1zM26 8h1v1h-1zM39 8h1v1h-1zM42 8h1v1h-1zM44 8h2v1h-2zM52 8h2v1h-2zM55 8h1v1h-1zM65 8h1v1h-1zM70 8h1v1h-1zM78 8h1v1h-1zM81 8h1v1h-1zM75 9h1v1h-1zM10 10h1v1h-1zM67 10h1v1h-1zM74 10h1v1h-1zM72 11h1v1h-1z" fill-opacity="0.75"/><path d="M30 1h1v1h-1zM70 1h1v1h-1zM30 2h1v1h-1zM70 2h1v1h-1zM30 3h1v1h-1zM70 3h1v1h-1zM30 4h1v1h-1zM70 4h1v1h-1zM3 5h1v1h-1zM30 5h1v1h-1zM38 5h1v1h-1zM51 5h1v1h-1zM70 5h1v1h-1zM7 6h1v1h-1zM19 6h1v1h-1zM23 6h1v1h-1zM30 6h1v1h-1zM43 6h1v1h-1zM51 6h1v1h-1zM70 6h1v1h-1zM75 6h1v1h-1zM87 6h1v1h-1zM7 7h1v1h-1zM18 7h1v1h-1zM23 7h1v1h-1zM30 7h1v1h-1zM45 7h1v1h-1zM50 7h1v1h-1zM56 7h2v1h-2zM70 7h1v1h-1zM73 7h1v1h-1zM80 7h1v1h-1zM86 7h1v1h-1zM5 8h2v1h-2zM13 8h4v1h-4zM21 8h2v1h-2zM24 8h2v1h-2zM30 8h1v1h-1zM40 8h2v1h-2zM43 8h1v1h-1zM48 8h2v1h-2zM54 8h1v1h-1zM74 8h2v1h-2zM79 8h1v1h-1zM82 8h3v1h-3zM12 9h1v1h-1zM65 9h1v1h-1zM69 9h1v1h-1zM11 10h1v1h-1z"/></svg><div class="ab" style="left:154px;top:730px;width:1px;height:12px;background:#9C9AA0"></div><div class="ab" style="left:187px;top:155px;width:2px;height:574px;background:#A3A1A8"></div><div class="ab" style="left:189px;top:156px;width:1091px;height:571px;background:#000"></div><div class="ab" style="left:1278px;top:156px;width:2px;height:573px;background:#F6F6F8"></div><svg class="ab" style="left:0;top:0" width="1280" height="800" viewBox="0 0 1280 800"><rect x="191.5" y="158.5" width="1047" height="551" fill="none" stroke="#fff"/><path d="M192 380.5H1238" stroke="#B81C1C"/><path d="M192 427.5H1238" stroke="#B4B4B4"/><path d="M192 709L198 709 192 703Z" fill="#8A98A8"/><polyline points="192,442 208,456 224,424 240,427 256,449 272,566 288,556 304,588 320,588 336,588 352,605 368,588 384,550 400,450 416,532 432,450 448,550 464,588 480,602 496,584 512,584 528,564 544,556 560,540 576,515 592,500 608,547 624,477 640,428 656,410 672,376 688,386 704,351 720,390 736,394 752,342 768,385 784,237 800,247 816,302 832,269 848,290 864,245 880,291 896,294 912,294 928,329 944,349 960,339 976,360 992,360 1008,350 1024,408 1040,411 1056,485 1072,430 1088,407 1104,401 1120,387 1136,423 1152,423 1168,380 1184,427 1200,427" fill="none" stroke="#33F033" stroke-width="2" stroke-linejoin="miter"/><polygon points="391.0,444.5 455.0,444.5 458.0,450.0 459.0,480.0 459.5,517.5 455.0,525.0 445.0,532.5 430.0,538.0 418.0,540.0 412.0,543.0 405.0,545.0 397.0,544.0 390.0,540.0 380.0,530.0 373.0,522.0 369.0,513.0 368.8,502.5 369.0,490.0 370.0,480.0 373.0,470.0 377.5,462.5 384.0,451.0" fill="none" stroke="#B4E8F2" stroke-width="1" shape-rendering="crispEdges"/><polygon points="687.0,354.5 690.0,346.3 699.0,336.5 705.0,335.0 729.0,335.0 735.0,331.7 759.0,331.3 769.5,337.3 777.0,341.8 783.0,345.5 786.0,353.0 787.5,369.5 786.8,384.5 780.0,395.0 771.0,404.8 759.0,408.5 751.5,409.3 750.0,407.0 729.0,405.8 720.0,396.5 709.5,388.3 703.5,387.5 699.0,389.8 693.0,381.5 686.3,372.5" fill="none" stroke="#B4E8F2" stroke-width="1" shape-rendering="crispEdges"/><polygon points="791.8,261.3 794.8,254.5 804.5,240.3 815.0,236.5 821.0,232.0 833.0,228.3 849.5,229.0 866.0,234.3 875.0,241.8 879.5,247.0 879.5,262.0 873.5,269.5 866.0,280.0 860.0,292.0 848.0,310.0 833.0,318.3 821.0,319.0 809.0,310.0 800.0,295.0 796.3,283.0 793.3,276.3 792.5,263.5" fill="none" stroke="#B4E8F2" stroke-width="1" shape-rendering="crispEdges"/><polygon points="1105.2,378.2 1108.4,372.5 1114.0,362.7 1123.0,353.8 1140.1,353.3 1148.2,356.2 1159.6,361.1 1174.2,367.6 1185.6,371.7 1200.2,379.0 1208.3,390.4 1214.0,401.7 1216.5,421.2 1217.8,443.2 1210.0,445.6 1201.8,450.5 1192.0,455.3 1179.1,455.7 1167.7,457.0 1156.3,459.4 1148.2,455.3 1135.2,444.0 1120.6,431.0 1114.1,421.2 1108.4,411.5 1106.0,403.4 1104.4,387.1" fill="none" stroke="#B4E8F2" stroke-width="1" shape-rendering="crispEdges"/><path d="M1195 417.5V386.5M1191.3 391.7L1195 386 1199 391.7" stroke="#fff" stroke-width="2" fill="none"/><path d="M1239 178.5H1242" stroke="#fff"/><text x="1244" y="181.3" fill="#fff" font-size="8.8" font-family="Liberation Sans">1.4535</text><path d="M1239 215.5H1242" stroke="#fff"/><text x="1244" y="217.8" fill="#fff" font-size="8.8" font-family="Liberation Sans">1.4525</text><path d="M1239 251.5H1242" stroke="#fff"/><text x="1244" y="254.3" fill="#fff" font-size="8.8" font-family="Liberation Sans">1.4515</text><path d="M1239 288.5H1242" stroke="#fff"/><text x="1244" y="290.9" fill="#fff" font-size="8.8" font-family="Liberation Sans">1.4505</text><path d="M1239 324.5H1242" stroke="#fff"/><text x="1244" y="327.4" fill="#fff" font-size="8.8" font-family="Liberation Sans">1.4495</text><path d="M1239 361.5H1242" stroke="#fff"/><text x="1244" y="363.9" fill="#fff" font-size="8.8" font-family="Liberation Sans">1.4485</text><path d="M1239 397.5H1242" stroke="#fff"/><text x="1244" y="400.4" fill="#fff" font-size="8.8" font-family="Liberation Sans">1.4475</text><path d="M1239 434.5H1242" stroke="#fff"/><text x="1244" y="436.9" fill="#fff" font-size="8.8" font-family="Liberation Sans">1.4465</text><path d="M1239 470.5H1242" stroke="#fff"/><text x="1244" y="473.5" fill="#fff" font-size="8.8" font-family="Liberation Sans">1.4455</text><path d="M1239 507.5H1242" stroke="#fff"/><text x="1244" y="510.0" fill="#fff" font-size="8.8" font-family="Liberation Sans">1.4445</text><path d="M1239 543.5H1242" stroke="#fff"/><text x="1244" y="546.5" fill="#fff" font-size="8.8" font-family="Liberation Sans">1.4435</text><path d="M1239 580.5H1242" stroke="#fff"/><text x="1244" y="583.0" fill="#fff" font-size="8.8" font-family="Liberation Sans">1.4425</text><path d="M1239 616.5H1242" stroke="#fff"/><text x="1244" y="619.5" fill="#fff" font-size="8.8" font-family="Liberation Sans">1.4415</text><path d="M1239 653.5H1242" stroke="#fff"/><text x="1244" y="656.1" fill="#fff" font-size="8.8" font-family="Liberation Sans">1.4405</text><path d="M1239 689.5H1242" stroke="#fff"/><text x="1244" y="692.6" fill="#fff" font-size="8.8" font-family="Liberation Sans">1.4395</text><path d="M192.5 710V713" stroke="#fff"/><text x="192" y="722" fill="#fff" font-size="9.2" font-family="Liberation Sans">1 Nov 2007</text><path d="M256.5 710V713" stroke="#fff"/><text x="256" y="722" fill="#fff" font-size="9.2" font-family="Liberation Sans">1 Nov 09:00</text><path d="M320.5 710V713" stroke="#fff"/><text x="320" y="722" fill="#fff" font-size="9.2" font-family="Liberation Sans">1 Nov 13:00</text><path d="M384.5 710V713" stroke="#fff"/><text x="384" y="722" fill="#fff" font-size="9.2" font-family="Liberation Sans">1 Nov 17:00</text><path d="M448.5 710V713" stroke="#fff"/><text x="448" y="722" fill="#fff" font-size="9.2" font-family="Liberation Sans">1 Nov 21:00</text><path d="M512.5 710V713" stroke="#fff"/><text x="512" y="722" fill="#fff" font-size="9.2" font-family="Liberation Sans">2 Nov 01:00</text><path d="M576.5 710V713" stroke="#fff"/><text x="576" y="722" fill="#fff" font-size="9.2" font-family="Liberation Sans">2 Nov 05:00</text><path d="M640.5 710V713" stroke="#fff"/><text x="640" y="722" fill="#fff" font-size="9.2" font-family="Liberation Sans">2 Nov 09:00</text><path d="M704.5 710V713" stroke="#fff"/><text x="704" y="722" fill="#fff" font-size="9.2" font-family="Liberation Sans">2 Nov 13:00</text><path d="M768.5 710V713" stroke="#fff"/><text x="768" y="722" fill="#fff" font-size="9.2" font-family="Liberation Sans">2 Nov 17:00</text><path d="M832.5 710V713" stroke="#fff"/><text x="832" y="722" fill="#fff" font-size="9.2" font-family="Liberation Sans">2 Nov 21:00</text><path d="M896.5 710V713" stroke="#fff"/><text x="896" y="722" fill="#fff" font-size="9.2" font-family="Liberation Sans">5 Nov 02:00</text><path d="M960.5 710V713" stroke="#fff"/><text x="960" y="722" fill="#fff" font-size="9.2" font-family="Liberation Sans">5 Nov 06:00</text><path d="M1024.5 710V713" stroke="#fff"/><text x="1024" y="722" fill="#fff" font-size="9.2" font-family="Liberation Sans">5 Nov 10:00</text><path d="M1088.5 710V713" stroke="#fff"/><text x="1088" y="722" fill="#fff" font-size="9.2" font-family="Liberation Sans">5 Nov 14:00</text><path d="M1152.5 710V713" stroke="#fff"/><text x="1152" y="722" fill="#fff" font-size="9.2" font-family="Liberation Sans">5 Nov 18:00</text><rect x="1241" y="374" width="34" height="11" fill="#E81414"/><text x="1244" y="383.5" fill="#300" font-size="9.3" font-family="Liberation Sans">1.4480</text><rect x="1241" y="421" width="34" height="11" fill="#fff"/><text x="1244" y="430.5" fill="#000" font-size="9.3" font-family="Liberation Sans">1.4467</text><text x="195" y="170" fill="#fff" font-size="9.3" font-family="Liberation Sans">EURUSD,H1&#160; 1.4468 1.4469 1.4462 1.4467</text></svg><div class="ab" style="left:189px;top:727px;width:1091px;height:2px;background:#F4F4F6"></div><div class="ab" style="left:189px;top:729px;width:1091px;height:1px;background:#101010"></div><div class="ab" style="left:189px;top:730px;width:1091px;height:18px;background:#EBE9EE"></div><div class="ab" style="left:188px;top:729px;width:1px;height:20px;background:#98969C"></div><div class="t" style="left:203px;top:733px;font-size:11px;letter-spacing:-0.55px;color:#7E7C84">USDCHF,M30</div><div class="t" style="left:291px;top:733px;font-size:11px;letter-spacing:-0.55px;color:#7E7C84">GBPUSD,H4</div><div class="t" style="left:371px;top:733px;font-size:11px;letter-spacing:-0.55px;color:#7E7C84">USDJPY,Daily</div><div class="t" style="left:458px;top:733px;font-size:11px;letter-spacing:-0.55px;color:#7E7C84">GBPJPY,H4</div><div class="t" style="left:533px;top:733px;font-size:11px;letter-spacing:-0.55px;color:#7E7C84">NZDCHF,Daily</div><div class="ab" style="left:279px;top:732px;width:1px;height:12px;background:#A09EA4"></div><div class="ab" style="left:359px;top:732px;width:1px;height:12px;background:#A09EA4"></div><div class="ab" style="left:447px;top:732px;width:1px;height:12px;background:#A09EA4"></div><div class="ab" style="left:523px;top:732px;width:1px;height:12px;background:#A09EA4"></div><div class="ab" style="left:611px;top:727px;width:80px;height:21px;background:#fff;border:1px solid #000;border-top:none;border-right-width:2px;border-bottom-width:2px"></div><div class="t" style="left:622px;top:733px;font-size:11px;letter-spacing:-0.9px;color:#000">EURUSD,H1</div><svg class="ab" style="left:1251px;top:734px" width="6" height="8" viewBox="0 0 6 8"><path d="M5 0L1 4 5 8Z" fill="#A0A0A8"/></svg><svg class="ab" style="left:1267px;top:734px" width="6" height="8" viewBox="0 0 6 8"><path d="M1 0L5 4 1 8Z" fill="#A0A0A8"/></svg><div class="ab" style="left:189px;top:748px;width:1091px;height:1px;background:#A3A1A8"></div><div class="ab" style="left:0;top:749px;width:1280px;height:1px;background:#fff"></div><div class="ab" style="left:0;top:750px;width:1280px;height:20px;background:#EBE9EE"></div><svg width="119" height="11" style="position:absolute;left:2px;top:756px" fill="#000" shape-rendering="crispEdges"><path d="M10 0h1v1h-1zM26 0h1v1h-1zM49 0h1v1h-1zM77 0h1v1h-1zM97 0h1v1h-1zM100 0h1v1h-1zM11 1h1v1h-1zM25 1h1v1h-1zM98 1h1v1h-1zM101 1h1v1h-1zM117 1h1v1h-1zM11 2h1v1h-1zM25 2h1v1h-1zM98 2h1v1h-1zM101 2h1v1h-1zM108 2h1v1h-1zM117 2h1v1h-1zM11 3h1v1h-1zM17 3h1v1h-1zM25 3h1v1h-1zM74 3h1v1h-1zM98 3h1v1h-1zM101 3h1v1h-1zM108 3h1v1h-1zM117 3h1v1h-1zM11 4h1v1h-1zM16 4h1v1h-1zM25 4h1v1h-1zM35 4h1v1h-1zM41 4h2v1h-2zM73 4h1v1h-1zM98 4h1v1h-1zM101 4h1v1h-1zM111 4h1v1h-1zM117 4h1v1h-1zM11 5h1v1h-1zM25 5h1v1h-1zM28 5h1v1h-1zM37 5h1v1h-1zM43 5h1v1h-1zM66 5h1v1h-1zM88 5h1v1h-1zM91 5h2v1h-2zM98 5h1v1h-1zM101 5h1v1h-1zM108 5h1v1h-1zM117 5h1v1h-1zM11 6h1v1h-1zM16 6h1v1h-1zM18 6h1v1h-1zM25 6h1v1h-1zM29 6h1v1h-1zM32 6h1v1h-1zM37 6h1v1h-1zM42 6h1v1h-1zM44 6h1v1h-1zM58 6h1v1h-1zM68 6h1v1h-1zM73 6h1v1h-1zM75 6h1v1h-1zM88 6h1v1h-1zM90 6h1v1h-1zM98 6h1v1h-1zM101 6h1v1h-1zM108 6h1v1h-1zM117 6h1v1h-1zM0 7h1v1h-1zM5 7h1v1h-1zM14 7h1v1h-1zM25 7h1v1h-1zM45 7h1v1h-1zM47 7h1v1h-1zM58 7h1v1h-1zM71 7h1v1h-1zM78 7h1v1h-1zM91 7h1v1h-1zM94 7h1v1h-1zM101 7h1v1h-1zM108 7h1v1h-1zM117 7h1v1h-1zM0 8h1v1h-1zM7 8h1v1h-1zM23 8h1v1h-1zM35 8h1v1h-1zM46 8h1v1h-1zM57 8h1v1h-1zM64 8h1v1h-1zM108 8h1v1h-1zM60 9h2v1h-2zM65 9h1v1h-1zM92 9h1v1h-1zM2 10h1v1h-1zM5 10h1v1h-1z" fill-opacity="0.25"/><path d="M15 3h1v1h-1zM35 3h1v1h-1zM59 3h3v1h-3zM72 3h1v1h-1zM14 4h1v1h-1zM66 4h1v1h-1zM71 4h1v1h-1zM59 5h1v1h-1zM61 5h1v1h-1zM6 6h2v1h-2zM15 6h1v1h-1zM17 6h1v1h-1zM27 6h1v1h-1zM35 6h1v1h-1zM40 6h2v1h-2zM47 6h1v1h-1zM57 6h1v1h-1zM61 6h1v1h-1zM72 6h1v1h-1zM74 6h1v1h-1zM81 6h2v1h-2zM84 6h2v1h-2zM7 7h2v1h-2zM11 7h1v1h-1zM17 7h1v1h-1zM30 7h1v1h-1zM32 7h1v1h-1zM34 7h1v1h-1zM56 7h2v1h-2zM68 7h1v1h-1zM74 7h1v1h-1zM88 7h1v1h-1zM98 7h1v1h-1zM15 8h1v1h-1zM31 8h1v1h-1zM36 8h1v1h-1zM38 8h1v1h-1zM41 8h1v1h-1zM62 8h1v1h-1zM67 8h1v1h-1zM72 8h1v1h-1zM77 8h1v1h-1zM79 8h1v1h-1zM95 8h1v1h-1zM3 9h2v1h-2zM3 10h2v1h-2z" fill-opacity="0.50"/><path d="M10 1h1v1h-1zM26 1h1v1h-1zM97 1h1v1h-1zM100 1h1v1h-1zM111 1h1v1h-1zM114 1h1v1h-1zM10 2h1v1h-1zM26 2h1v1h-1zM97 2h1v1h-1zM100 2h1v1h-1zM116 2h1v1h-1zM10 3h1v1h-1zM16 3h1v1h-1zM26 3h1v1h-1zM73 3h1v1h-1zM97 3h1v1h-1zM100 3h1v1h-1zM116 3h1v1h-1zM10 4h1v1h-1zM15 4h1v1h-1zM26 4h1v1h-1zM72 4h1v1h-1zM97 4h1v1h-1zM100 4h1v1h-1zM116 4h1v1h-1zM10 5h1v1h-1zM14 5h1v1h-1zM26 5h1v1h-1zM29 5h1v1h-1zM31 5h1v1h-1zM35 5h1v1h-1zM44 5h1v1h-1zM46 5h1v1h-1zM60 5h1v1h-1zM67 5h1v1h-1zM71 5h1v1h-1zM87 5h1v1h-1zM97 5h1v1h-1zM100 5h1v1h-1zM116 5h1v1h-1zM10 6h1v1h-1zM14 6h1v1h-1zM26 6h1v1h-1zM28 6h1v1h-1zM31 6h1v1h-1zM34 6h1v1h-1zM46 6h1v1h-1zM59 6h1v1h-1zM62 6h1v1h-1zM67 6h1v1h-1zM71 6h1v1h-1zM87 6h1v1h-1zM92 6h2v1h-2zM97 6h1v1h-1zM100 6h1v1h-1zM116 6h1v1h-1zM1 7h1v1h-1zM6 7h1v1h-1zM10 7h1v1h-1zM27 7h1v1h-1zM36 7h1v1h-1zM40 7h1v1h-1zM59 7h1v1h-1zM81 7h2v1h-2zM84 7h2v1h-2zM87 7h1v1h-1zM90 7h1v1h-1zM97 7h1v1h-1zM100 7h1v1h-1zM116 7h1v1h-1zM1 8h1v1h-1zM6 8h1v1h-1zM8 8h1v1h-1zM10 8h1v1h-1zM12 8h1v1h-1zM14 8h1v1h-1zM30 8h1v1h-1zM34 8h1v1h-1zM40 8h1v1h-1zM45 8h1v1h-1zM56 8h1v1h-1zM59 8h3v1h-3zM65 8h1v1h-1zM68 8h1v1h-1zM71 8h1v1h-1zM81 8h2v1h-2zM84 8h2v1h-2zM87 8h2v1h-2zM90 8h1v1h-1zM92 8h1v1h-1zM97 8h1v1h-1zM100 8h1v1h-1zM114 8h1v1h-1zM1 9h2v1h-2zM5 9h2v1h-2z" fill-opacity="0.75"/><path d="M49 1h1v1h-1zM77 1h1v1h-1zM107 1h4v1h-4zM115 1h2v1h-2zM49 2h1v1h-1zM77 2h1v1h-1zM107 2h1v1h-1zM49 3h1v1h-1zM77 3h1v1h-1zM107 3h1v1h-1zM49 4h1v1h-1zM77 4h1v1h-1zM107 4h4v1h-4zM30 5h1v1h-1zM34 5h1v1h-1zM36 5h1v1h-1zM45 5h1v1h-1zM49 5h1v1h-1zM77 5h1v1h-1zM107 5h1v1h-1zM36 6h1v1h-1zM43 6h1v1h-1zM49 6h1v1h-1zM77 6h1v1h-1zM91 6h1v1h-1zM107 6h1v1h-1zM15 7h2v1h-2zM26 7h1v1h-1zM31 7h1v1h-1zM35 7h1v1h-1zM41 7h2v1h-2zM46 7h1v1h-1zM49 7h1v1h-1zM62 7h1v1h-1zM67 7h1v1h-1zM72 7h2v1h-2zM77 7h1v1h-1zM93 7h1v1h-1zM107 7h1v1h-1zM9 8h1v1h-1zM11 8h1v1h-1zM13 8h1v1h-1zM24 8h6v1h-6zM32 8h2v1h-2zM37 8h1v1h-1zM39 8h1v1h-1zM42 8h3v1h-3zM49 8h1v1h-1zM66 8h1v1h-1zM69 8h2v1h-2zM78 8h1v1h-1zM80 8h1v1h-1zM83 8h1v1h-1zM86 8h1v1h-1zM89 8h1v1h-1zM91 8h1v1h-1zM93 8h2v1h-2zM96 8h1v1h-1zM98 8h2v1h-2zM107 8h1v1h-1zM115 8h4v1h-4z"/></svg><div class="ab" style="left:559px;top:751px;width:1px;height:17px;background:#B0AEB4"></div><div class="ab" style="left:560px;top:751px;width:1px;height:17px;background:#fff"></div><div class="ab" style="left:668px;top:751px;width:1px;height:17px;background:#B0AEB4"></div><div class="ab" style="left:669px;top:751px;width:1px;height:17px;background:#fff"></div><div class="ab" style="left:769px;top:751px;width:1px;height:17px;background:#B0AEB4"></div><div class="ab" style="left:770px;top:751px;width:1px;height:17px;background:#fff"></div><div class="ab" style="left:841px;top:751px;width:1px;height:17px;background:#B0AEB4"></div><div class="ab" style="left:842px;top:751px;width:1px;height:17px;background:#fff"></div><div class="ab" style="left:912px;top:751px;width:1px;height:17px;background:#B0AEB4"></div><div class="ab" style="left:913px;top:751px;width:1px;height:17px;background:#fff"></div><div class="ab" style="left:981px;top:751px;width:1px;height:17px;background:#B0AEB4"></div><div class="ab" style="left:982px;top:751px;width:1px;height:17px;background:#fff"></div><div class="ab" style="left:1051px;top:751px;width:1px;height:17px;background:#B0AEB4"></div><div class="ab" style="left:1052px;top:751px;width:1px;height:17px;background:#fff"></div><div class="ab" style="left:1117px;top:751px;width:1px;height:17px;background:#B0AEB4"></div><div class="ab" style="left:1118px;top:751px;width:1px;height:17px;background:#fff"></div><svg width="22" height="10" style="position:absolute;left:566px;top:756px" fill="#000" shape-rendering="crispEdges"><path d="M20 0h1v1h-1zM13 4h3v1h-3zM2 5h1v1h-1zM8 5h2v1h-2zM4 6h1v1h-1zM7 6h1v1h-1zM15 6h1v1h-1zM8 7h1v1h-1zM11 7h1v1h-1zM16 7h1v1h-1zM0 8h1v1h-1zM1 9h1v1h-1zM9 9h1v1h-1z" fill-opacity="0.25"/><path d="M2 4h1v1h-1zM17 5h1v1h-1zM4 7h1v1h-1zM14 7h1v1h-1zM3 8h1v1h-1zM14 8h1v1h-1z" fill-opacity="0.50"/><path d="M3 5h1v1h-1zM13 5h4v1h-4zM3 6h1v1h-1zM9 6h2v1h-2zM17 6h1v1h-1zM7 7h1v1h-1zM1 8h1v1h-1zM4 8h1v1h-1zM7 8h1v1h-1zM9 8h1v1h-1z" fill-opacity="0.75"/><path d="M20 1h1v1h-1zM20 2h1v1h-1zM20 3h1v1h-1zM20 4h1v1h-1zM20 5h1v1h-1zM8 6h1v1h-1zM16 6h1v1h-1zM20 6h1v1h-1zM3 7h1v1h-1zM10 7h1v1h-1zM15 7h1v1h-1zM20 7h1v1h-1zM2 8h1v1h-1zM5 8h2v1h-2zM8 8h1v1h-1zM10 8h4v1h-4zM20 8h1v1h-1z"/></svg><div class="t" style="left:674px;top:755px;font-size:11px">2007.11.02 22:00</div><div class="t" style="left:775px;top:755px;font-size:11px">O: 1.4511</div><div class="t" style="left:846px;top:755px;font-size:11px">H: 1.4521</div><div class="t" style="left:917px;top:755px;font-size:11px">L: 1.4501</div><div class="t" style="left:987px;top:755px;font-size:11px">C: 1.4504</div><div class="t" style="left:1058px;top:755px;font-size:11px">V: 222</div><div class="t" style="left:1173px;top:755px;font-size:11px">1851/2 kb</div><svg class="ab" style="left:1124px;top:755px" width="24" height="12" viewBox="0 0 24 12"><rect x="0" y="0" width="2" height="9" fill="#3C6A14"/><rect x="0" y="10" width="2" height="2" fill="#7A1410"/><rect x="3" y="0" width="2" height="7" fill="#3C6A14"/><rect x="3" y="8" width="2" height="4" fill="#7A1410"/><rect x="6" y="0" width="2" height="6" fill="#3C6A14"/><rect x="6" y="7" width="2" height="5" fill="#7A1410"/><rect x="9" y="0" width="2" height="5" fill="#3C6A14"/><rect x="9" y="6" width="2" height="6" fill="#7A1410"/><rect x="12" y="0" width="2" height="4" fill="#3C6A14"/><rect x="12" y="5" width="2" height="7" fill="#7A1410"/><rect x="15" y="0" width="2" height="3" fill="#3C6A14"/><rect x="15" y="4" width="2" height="8" fill="#7A1410"/><rect x="18" y="0" width="2" height="2" fill="#3C6A14"/><rect x="18" y="3" width="2" height="9" fill="#7A1410"/><rect x="21" y="0" width="2" height="1" fill="#3C6A14"/><rect x="21" y="2" width="2" height="10" fill="#7A1410"/></svg><svg class="ab" style="left:1264px;top:754px" width="16" height="16" viewBox="0 0 16 16"><path d="M16 1L1 16M16 5L5 16M16 9L9 16M16 13L13 16" stroke="#8E8E94" stroke-width="1.3"/><path d="M16 2.5L2.5 16M16 6.5L6.5 16M16 10.5L10.5 16" stroke="#fff" stroke-width="1"/></svg><div class="ab" style="left:0;top:770px;width:1280px;height:30px;background:linear-gradient(#1F3F9F 0px,#7AB8F2 1px,#76B2F0 3px,#5A94E6 7px,#3E78DC 12px,#3066D4 17px,#2A58C8 24px,#2450BC 28px,#2048B0 30px)"></div><div class="ab" style="left:0;top:770px;width:146px;height:30px;border-top:1px solid #1E5AC8;background:linear-gradient(#0E8BF0 0px,#0F9AF4 1px,#13A3F6 4px,#0E94EE 14px,#0B82E4 28px)"></div><div class="ab" style="left:0;top:770px;width:146px;height:1px;background:#3A4860"></div><div class="ab" style="left:0;top:771px;width:146px;height:29px;background:linear-gradient(#F4FAFF 0px,#D8E8F8 6px,#B0D0F0 13px,#88B4E4 19px,#6C9CD8 25px,#5C8CCC 29px)"></div><svg width="38" height="10" style="position:absolute;left:16px;top:782px" fill="#111" shape-rendering="crispEdges"><path d="M11 0h1v1h-1zM26 0h1v1h-1zM31 0h2v1h-2zM37 0h1v1h-1zM13 2h1v1h-1zM30 2h1v1h-1zM36 2h1v1h-1zM2 3h1v1h-1zM5 3h1v1h-1zM4 4h1v1h-1zM12 4h1v1h-1zM18 4h2v1h-2zM27 4h1v1h-1zM33 4h1v1h-1zM12 5h1v1h-1zM27 5h1v1h-1zM33 5h1v1h-1zM0 6h1v1h-1zM2 6h1v1h-1zM5 6h1v1h-1zM12 6h1v1h-1zM27 6h1v1h-1zM33 6h1v1h-1zM0 7h1v1h-1zM0 8h1v1h-1zM0 9h1v1h-1z" fill-opacity="0.25"/><path d="M24 1h1v1h-1zM28 1h2v1h-2zM34 1h2v1h-2zM29 2h1v1h-1zM35 2h1v1h-1zM12 3h2v1h-2zM18 3h2v1h-2zM27 3h2v1h-2zM33 3h2v1h-2zM3 4h1v1h-1zM1 5h1v1h-1zM4 5h1v1h-1zM3 6h2v1h-2zM24 6h1v1h-1zM1 9h1v1h-1z" fill-opacity="0.50"/><path d="M12 0h1v1h-1zM27 0h1v1h-1zM30 0h1v1h-1zM33 0h1v1h-1zM36 0h1v1h-1zM23 1h1v1h-1zM12 2h1v1h-1zM27 2h2v1h-2zM33 2h2v1h-2zM2 4h1v1h-1zM13 4h1v1h-1zM28 4h1v1h-1zM34 4h1v1h-1zM3 5h1v1h-1zM13 5h1v1h-1zM28 5h1v1h-1zM34 5h1v1h-1zM13 6h1v1h-1zM23 6h1v1h-1zM28 6h1v1h-1zM34 6h1v1h-1zM1 7h1v1h-1zM1 8h1v1h-1z" fill-opacity="0.75"/><path d="M12 1h1v1h-1zM27 1h1v1h-1zM30 1h1v1h-1zM33 1h1v1h-1zM36 1h1v1h-1zM3 3h2v1h-2zM5 4h1v1h-1zM2 5h1v1h-1zM5 5h1v1h-1zM1 6h1v1h-1z"/></svg><svg class="ab" style="left:64px;top:776px" width="14" height="16" viewBox="0 0 14 16"><rect x="1" y="1" width="12" height="10" fill="#7a7a78" stroke="#444"/><path d="M2 13h3M8 13h3" stroke="#222" stroke-width="1.5"/></svg><svg class="ab" style="left:81px;top:776px" width="17" height="16" viewBox="0 0 17 16"><rect x="1" y="11" width="3" height="4" fill="#2BC02B" stroke="#0a600a" stroke-width=".6"/><rect x="5" y="8" width="3" height="7" fill="#2BC02B" stroke="#0a600a" stroke-width=".6"/><rect x="9" y="5" width="3" height="10" fill="#2BC02B" stroke="#0a600a" stroke-width=".6"/><rect x="13" y="1" width="3" height="14" fill="#2BC02B" stroke="#0a600a" stroke-width=".6"/></svg><svg class="ab" style="left:101px;top:777px" width="15" height="15" viewBox="0 0 15 15"><rect x="0.5" y="0.5" width="14" height="14" rx="2" fill="#fff" stroke="#1A9A8A"/><path d="M5 3a5 5 0 0 0 0 9M10 3a5 5 0 0 1 0 9" stroke="#1A8A7A" stroke-width="2.2" fill="none"/></svg><svg class="ab" style="left:118px;top:777px" width="16" height="15" viewBox="0 0 16 15"><rect x="1" y="4" width="7" height="6" fill="#5BB0F0" stroke="#2a6aa8" stroke-width=".8"/><path d="M2 12h6" stroke="#333"/><path d="M11 2q2 3 0 6M13 1q3 4 0 8" stroke="#2ab02a" fill="none"/></svg><div class="ab" style="left:136px;top:777px;width:17px;height:17px;border-radius:50%;background:radial-gradient(circle at 40% 35%,#fff,#C8D8F4 60%,#8AA8E0);border:1px solid #5A84D0"></div><svg class="ab" style="left:140px;top:781px" width="10" height="10" viewBox="0 0 10 10"><path d="M3 1.5L7 5 3 8.5" stroke="#2C4C9C" stroke-width="2" fill="none"/></svg><div class="ab" style="left:166px;top:778px;width:16px;height:13px;background:#2458B4"></div><div class="t" style="left:166.5px;top:779.5px;font-size:11px;letter-spacing:-0.4px;color:#fff">EN</div><svg width="26" height="12" style="position:absolute;left:193px;top:780px" fill="#fff" shape-rendering="crispEdges"><path d="M9 0h1v1h-1zM24 3h1v1h-1zM23 4h1v1h-1zM14 5h1v1h-1zM18 5h1v1h-1zM7 6h1v1h-1zM15 6h1v1h-1zM23 6h1v1h-1zM25 6h1v1h-1zM0 7h1v1h-1zM7 7h1v1h-1zM13 7h1v1h-1zM19 7h1v1h-1zM21 7h1v1h-1zM0 8h1v1h-1zM5 8h1v1h-1zM3 9h2v1h-2zM15 9h1v1h-1zM5 10h1v1h-1zM10 10h2v1h-2zM10 11h1v1h-1zM13 11h1v1h-1z" fill-opacity="0.25"/><path d="M22 3h1v1h-1zM21 4h1v1h-1zM13 5h1v1h-1zM1 6h1v1h-1zM22 6h1v1h-1zM24 6h1v1h-1zM14 7h2v1h-2zM24 7h1v1h-1zM12 8h1v1h-1zM22 8h1v1h-1zM2 9h1v1h-1zM6 9h1v1h-1zM2 10h1v1h-1zM12 10h1v1h-1zM14 10h1v1h-1zM12 11h1v1h-1z" fill-opacity="0.50"/><path d="M18 3h1v1h-1zM23 3h1v1h-1zM3 4h1v1h-1zM22 4h1v1h-1zM21 5h1v1h-1zM6 6h1v1h-1zM12 6h2v1h-2zM21 6h1v1h-1zM1 7h1v1h-1zM6 7h1v1h-1zM1 8h1v1h-1zM16 8h1v1h-1zM18 8h1v1h-1zM21 8h1v1h-1zM1 9h1v1h-1zM5 9h1v1h-1zM14 9h1v1h-1zM3 10h2v1h-2zM13 10h1v1h-1zM11 11h1v1h-1z" fill-opacity="0.75"/><path d="M9 1h1v1h-1zM9 2h1v1h-1zM9 3h1v1h-1zM9 4h1v1h-1zM6 5h1v1h-1zM9 5h1v1h-1zM9 6h1v1h-1zM14 6h1v1h-1zM18 6h1v1h-1zM9 7h1v1h-1zM12 7h1v1h-1zM18 7h1v1h-1zM22 7h2v1h-2zM6 8h1v1h-1zM9 8h1v1h-1zM13 8h3v1h-3zM17 8h1v1h-1zM19 8h2v1h-2z"/></svg><div class="ab" style="left:232px;top:774px;width:157px;height:24px;border-radius:3px;background:linear-gradient(#66A6F2 0px,#5494EC 2px,#4482E4 6px,#3A74DC 12px,#3268D2 18px,#2E60C8 24px);border:1px solid #2855B8;box-shadow:inset 1px 1px 0 rgba(255,255,255,.35)"></div><svg width="95" height="12" style="position:absolute;left:266px;top:780px" fill="#fff" shape-rendering="crispEdges"><path d="M8 0h1v1h-1zM26 0h1v1h-1zM30 0h1v1h-1zM52 0h1v1h-1zM27 1h1v1h-1zM27 2h1v1h-1zM27 3h1v1h-1zM67 3h1v1h-1zM27 4h1v1h-1zM66 4h1v1h-1zM2 5h1v1h-1zM5 5h1v1h-1zM18 5h1v1h-1zM27 5h1v1h-1zM57 5h1v1h-1zM61 5h1v1h-1zM84 5h1v1h-1zM88 5h1v1h-1zM93 5h1v1h-1zM4 6h1v1h-1zM18 6h1v1h-1zM27 6h1v1h-1zM50 6h1v1h-1zM58 6h1v1h-1zM66 6h1v1h-1zM68 6h1v1h-1zM80 6h1v1h-1zM85 6h1v1h-1zM90 6h1v1h-1zM9 7h1v1h-1zM18 7h1v1h-1zM22 7h1v1h-1zM27 7h1v1h-1zM43 7h1v1h-1zM50 7h1v1h-1zM56 7h1v1h-1zM62 7h1v1h-1zM64 7h1v1h-1zM73 7h1v1h-1zM80 7h1v1h-1zM83 7h1v1h-1zM0 8h1v1h-1zM2 8h1v1h-1zM5 8h1v1h-1zM43 8h1v1h-1zM48 8h1v1h-1zM73 8h1v1h-1zM78 8h1v1h-1zM86 8h1v1h-1zM0 9h1v1h-1zM21 9h1v1h-1zM23 9h1v1h-1zM46 9h2v1h-2zM58 9h1v1h-1zM76 9h2v1h-2zM85 9h1v1h-1zM87 9h1v1h-1zM0 10h1v1h-1zM18 10h1v1h-1zM22 10h1v1h-1zM48 10h1v1h-1zM53 10h2v1h-2zM78 10h1v1h-1zM80 10h2v1h-2zM0 11h1v1h-1zM18 11h1v1h-1zM20 11h1v1h-1zM53 11h1v1h-1zM56 11h1v1h-1zM80 11h1v1h-1zM83 11h1v1h-1z" fill-opacity="0.25"/><path d="M65 3h1v1h-1zM64 4h1v1h-1zM88 4h1v1h-1zM35 5h1v1h-1zM38 5h1v1h-1zM56 5h1v1h-1zM83 5h1v1h-1zM3 6h1v1h-1zM11 6h2v1h-2zM14 6h2v1h-2zM22 6h2v1h-2zM44 6h1v1h-1zM65 6h1v1h-1zM67 6h1v1h-1zM74 6h1v1h-1zM1 7h1v1h-1zM4 7h1v1h-1zM57 7h2v1h-2zM67 7h1v1h-1zM84 7h2v1h-2zM90 7h1v1h-1zM3 8h2v1h-2zM8 8h1v1h-1zM22 8h1v1h-1zM55 8h1v1h-1zM65 8h1v1h-1zM82 8h1v1h-1zM85 8h1v1h-1zM89 8h1v1h-1zM93 8h1v1h-1zM45 9h1v1h-1zM49 9h1v1h-1zM75 9h1v1h-1zM79 9h1v1h-1zM19 10h1v1h-1zM45 10h1v1h-1zM55 10h1v1h-1zM57 10h1v1h-1zM75 10h1v1h-1zM82 10h1v1h-1zM84 10h1v1h-1zM1 11h1v1h-1zM19 11h1v1h-1zM55 11h1v1h-1zM82 11h1v1h-1z" fill-opacity="0.50"/><path d="M26 1h1v1h-1zM26 2h1v1h-1zM26 3h1v1h-1zM61 3h1v1h-1zM66 3h1v1h-1zM26 4h1v1h-1zM46 4h1v1h-1zM65 4h1v1h-1zM76 4h1v1h-1zM17 5h1v1h-1zM26 5h1v1h-1zM64 5h1v1h-1zM89 5h1v1h-1zM2 6h1v1h-1zM17 6h1v1h-1zM26 6h1v1h-1zM49 6h1v1h-1zM55 6h2v1h-2zM64 6h1v1h-1zM79 6h1v1h-1zM82 6h2v1h-2zM89 6h1v1h-1zM3 7h1v1h-1zM11 7h2v1h-2zM14 7h2v1h-2zM17 7h1v1h-1zM23 7h1v1h-1zM26 7h1v1h-1zM44 7h1v1h-1zM49 7h1v1h-1zM74 7h1v1h-1zM79 7h1v1h-1zM11 8h2v1h-2zM14 8h2v1h-2zM17 8h1v1h-1zM26 8h1v1h-1zM44 8h1v1h-1zM59 8h1v1h-1zM61 8h1v1h-1zM64 8h1v1h-1zM74 8h1v1h-1zM87 8h1v1h-1zM90 8h1v1h-1zM1 9h1v1h-1zM44 9h1v1h-1zM48 9h1v1h-1zM57 9h1v1h-1zM74 9h1v1h-1zM78 9h1v1h-1zM84 9h1v1h-1zM1 10h1v1h-1zM20 10h1v1h-1zM46 10h2v1h-2zM56 10h1v1h-1zM76 10h2v1h-2zM83 10h1v1h-1zM93 10h1v1h-1zM54 11h1v1h-1zM81 11h1v1h-1z" fill-opacity="0.75"/><path d="M8 1h1v1h-1zM30 1h1v1h-1zM52 1h1v1h-1zM8 2h1v1h-1zM30 2h1v1h-1zM52 2h1v1h-1zM8 3h1v1h-1zM30 3h1v1h-1zM52 3h1v1h-1zM8 4h1v1h-1zM30 4h1v1h-1zM52 4h1v1h-1zM3 5h2v1h-2zM8 5h1v1h-1zM30 5h1v1h-1zM36 5h2v1h-2zM49 5h1v1h-1zM52 5h1v1h-1zM79 5h1v1h-1zM5 6h1v1h-1zM8 6h1v1h-1zM30 6h1v1h-1zM52 6h1v1h-1zM57 6h1v1h-1zM61 6h1v1h-1zM84 6h1v1h-1zM93 6h1v1h-1zM2 7h1v1h-1zM5 7h1v1h-1zM8 7h1v1h-1zM30 7h1v1h-1zM52 7h1v1h-1zM55 7h1v1h-1zM61 7h1v1h-1zM65 7h2v1h-2zM82 7h1v1h-1zM89 7h1v1h-1zM93 7h1v1h-1zM1 8h1v1h-1zM9 8h2v1h-2zM13 8h1v1h-1zM16 8h1v1h-1zM23 8h3v1h-3zM30 8h1v1h-1zM49 8h1v1h-1zM52 8h1v1h-1zM56 8h3v1h-3zM60 8h1v1h-1zM62 8h2v1h-2zM79 8h1v1h-1zM83 8h2v1h-2zM88 8h1v1h-1zM91 8h2v1h-2zM22 9h1v1h-1zM21 10h1v1h-1z"/></svg><svg class="ab" style="left:365px;top:777px" width="16" height="16"><path d="M3 5h10l-1.5 10h-7z" fill="#C8A878" stroke="#6a4a20"/><path d="M5 6L7 1M8 6l1-5M11 6l2-4" stroke="#d22" stroke-width="1.5"/></svg><div class="ab" style="left:392px;top:774px;width:158px;height:24px;border-radius:3px;background:linear-gradient(#66A6F2 0px,#5494EC 2px,#4482E4 6px,#3A74DC 12px,#3268D2 18px,#2E60C8 24px);border:1px solid #2855B8;box-shadow:inset 1px 1px 0 rgba(255,255,255,.35)"></div><svg width="120" height="12" style="position:absolute;left:402px;top:780px" fill="#fff" shape-rendering="crispEdges"><path d="M16 0h1v1h-1zM19 0h1v1h-1zM49 0h1v1h-1zM59 0h1v1h-1zM35 3h1v1h-1zM45 3h1v1h-1zM37 4h1v1h-1zM47 4h1v1h-1zM66 4h3v1h-3zM95 4h1v1h-1zM99 4h1v1h-1zM114 4h1v1h-1zM118 4h1v1h-1zM45 5h1v1h-1zM52 5h1v1h-1zM62 5h1v1h-1zM79 5h2v1h-2zM96 5h1v1h-1zM115 5h1v1h-1zM68 6h1v1h-1zM78 6h1v1h-1zM96 6h1v1h-1zM115 6h1v1h-1zM24 7h1v1h-1zM29 7h1v1h-1zM35 7h1v1h-1zM37 7h1v1h-1zM42 7h1v1h-1zM50 7h1v1h-1zM60 7h1v1h-1zM63 7h1v1h-1zM69 7h1v1h-1zM74 7h1v1h-1zM79 7h1v1h-1zM95 7h1v1h-1zM99 7h1v1h-1zM114 7h1v1h-1zM118 7h1v1h-1zM1 8h1v1h-1zM5 8h1v1h-1zM8 8h1v1h-1zM10 8h1v1h-1zM24 8h1v1h-1zM31 8h1v1h-1zM13 9h1v1h-1zM16 9h1v1h-1zM44 9h4v1h-4zM73 9h1v1h-1zM75 9h1v1h-1zM79 9h2v1h-2zM11 10h1v1h-1zM26 10h1v1h-1zM29 10h1v1h-1zM70 10h1v1h-1zM74 10h1v1h-1zM26 11h1v1h-1zM70 11h1v1h-1zM72 11h1v1h-1z" fill-opacity="0.25"/><path d="M35 2h1v1h-1zM46 3h1v1h-1zM98 3h1v1h-1zM117 3h1v1h-1zM46 4h1v1h-1zM98 4h1v1h-1zM117 4h1v1h-1zM37 5h1v1h-1zM46 5h1v1h-1zM70 5h1v1h-1zM93 5h1v1h-1zM112 5h1v1h-1zM30 6h2v1h-2zM37 6h1v1h-1zM74 6h2v1h-2zM93 6h1v1h-1zM112 6h1v1h-1zM11 7h1v1h-1zM31 7h2v1h-2zM48 7h1v1h-1zM67 7h1v1h-1zM98 7h1v1h-1zM117 7h1v1h-1zM15 8h1v1h-1zM36 8h1v1h-1zM49 8h1v1h-1zM52 8h1v1h-1zM59 8h1v1h-1zM64 8h1v1h-1zM67 8h1v1h-1zM74 8h1v1h-1zM98 8h1v1h-1zM117 8h1v1h-1zM12 9h1v1h-1zM14 9h1v1h-1zM27 9h2v1h-2zM12 10h1v1h-1zM14 10h1v1h-1zM27 10h2v1h-2zM71 10h1v1h-1zM27 11h1v1h-1zM71 11h1v1h-1z" fill-opacity="0.50"/><path d="M99 3h1v1h-1zM118 3h1v1h-1zM34 4h2v1h-2zM84 4h1v1h-1zM96 4h1v1h-1zM103 4h1v1h-1zM115 4h1v1h-1zM36 5h1v1h-1zM66 5h4v1h-4zM95 5h1v1h-1zM114 5h1v1h-1zM34 6h2v1h-2zM70 6h1v1h-1zM80 6h2v1h-2zM84 6h1v1h-1zM95 6h1v1h-1zM103 6h1v1h-1zM114 6h1v1h-1zM25 7h1v1h-1zM30 7h1v1h-1zM43 7h1v1h-1zM75 7h1v1h-1zM78 7h1v1h-1zM96 7h1v1h-1zM115 7h1v1h-1zM0 8h1v1h-1zM4 8h1v1h-1zM7 8h1v1h-1zM11 8h1v1h-1zM16 8h1v1h-1zM25 8h1v1h-1zM30 8h1v1h-1zM32 8h1v1h-1zM35 8h1v1h-1zM43 8h6v1h-6zM62 8h1v1h-1zM78 8h1v1h-1zM80 8h2v1h-2zM99 8h1v1h-1zM118 8h1v1h-1zM25 9h2v1h-2zM29 9h2v1h-2zM13 10h1v1h-1zM52 10h1v1h-1zM62 10h1v1h-1zM72 10h1v1h-1zM28 11h1v1h-1z" fill-opacity="0.75"/><path d="M16 1h1v1h-1zM19 1h1v1h-1zM49 1h1v1h-1zM59 1h1v1h-1zM16 2h1v1h-1zM19 2h1v1h-1zM49 2h1v1h-1zM59 2h1v1h-1zM16 3h1v1h-1zM19 3h1v1h-1zM49 3h1v1h-1zM59 3h1v1h-1zM16 4h1v1h-1zM19 4h1v1h-1zM36 4h1v1h-1zM49 4h1v1h-1zM59 4h1v1h-1zM85 4h6v1h-6zM97 4h1v1h-1zM104 4h6v1h-6zM116 4h1v1h-1zM16 5h1v1h-1zM19 5h1v1h-1zM34 5h1v1h-1zM49 5h1v1h-1zM59 5h1v1h-1zM94 5h1v1h-1zM113 5h1v1h-1zM16 6h1v1h-1zM19 6h1v1h-1zM36 6h1v1h-1zM49 6h1v1h-1zM52 6h1v1h-1zM59 6h1v1h-1zM62 6h1v1h-1zM69 6h1v1h-1zM79 6h1v1h-1zM85 6h6v1h-6zM94 6h1v1h-1zM104 6h6v1h-6zM113 6h1v1h-1zM16 7h1v1h-1zM19 7h1v1h-1zM36 7h1v1h-1zM49 7h1v1h-1zM52 7h1v1h-1zM59 7h1v1h-1zM62 7h1v1h-1zM68 7h1v1h-1zM81 7h1v1h-1zM97 7h1v1h-1zM116 7h1v1h-1zM19 8h1v1h-1zM33 8h2v1h-2zM50 8h2v1h-2zM60 8h2v1h-2zM63 8h1v1h-1zM65 8h2v1h-2zM75 8h3v1h-3zM79 8h1v1h-1zM11 9h1v1h-1zM15 9h1v1h-1zM74 9h1v1h-1zM73 10h1v1h-1z"/></svg><svg class="ab" style="left:526px;top:777px" width="16" height="16"><path d="M3 1h8l3 3v11H3z" fill="#fff" stroke="#555"/><circle cx="7" cy="9" r="4.5" fill="none" stroke="#1A6AD8" stroke-width="2"/><path d="M3 9h8" stroke="#1A6AD8" stroke-width="1.5"/></svg><div class="ab" style="left:552px;top:774px;width:158px;height:24px;border-radius:3px;background:linear-gradient(#66A6F2 0px,#5494EC 2px,#4482E4 6px,#3A74DC 12px,#3268D2 18px,#2E60C8 24px);border:1px solid #2855B8;box-shadow:inset 1px 1px 0 rgba(255,255,255,.35)"></div><div class="ab" style="left:560px;top:779px;width:121px;height:14px;overflow:hidden;text-align:right;direction:rtl"><span class="t" style="position:static;font-size:11px;color:#fff">Bahraini Saudi Bank T...</span></div><svg class="ab" style="left:686px;top:777px" width="16" height="16"><rect x="0" y="0" width="16" height="16" fill="#FAFAF6"/><path d="M0 8q7-4 16-5" stroke="#F0A040" stroke-width="2.2" fill="none"/><path d="M0 12q7-3 16-3" stroke="#8AA8D8" stroke-width="1.4" fill="none"/></svg><div class="ab" style="left:712px;top:774px;width:156px;height:24px;border-radius:3px;background:linear-gradient(#66A6F2 0px,#5494EC 2px,#4482E4 6px,#3A74DC 12px,#3268D2 18px,#2E60C8 24px);border:1px solid #2855B8;box-shadow:inset 1px 1px 0 rgba(255,255,255,.35)"></div><div class="ab" style="left:720px;top:779px;width:119px;height:14px;overflow:hidden;text-align:right;direction:rtl"><span class="t" style="position:static;font-size:11px;color:#fff">Pivot &amp; Camarilla Calc...</span></div><svg class="ab" style="left:844px;top:777px" width="18" height="16"><rect x="1.5" y="1.5" width="15" height="14" fill="none" stroke="#E8F0FF" stroke-dasharray="1 1"/><path d="M3 10L9 4 15 10" stroke="#101850" stroke-width="2.2" fill="none"/><path d="M4 13q2-3 5-1t5-1" stroke="#D02020" stroke-width="1.8" fill="none"/><path d="M3 7h12" stroke="#fff" stroke-dasharray="1 1"/></svg><div class="ab" style="left:871px;top:774px;width:157px;height:24px;border-radius:3px;background:linear-gradient(#66A6F2 0px,#5494EC 2px,#4482E4 6px,#3A74DC 12px,#3268D2 18px,#2E60C8 24px);border:1px solid #2855B8;box-shadow:inset 1px 1px 0 rgba(255,255,255,.35)"></div><div class="ab" style="left:879px;top:779px;width:120px;height:14px;overflow:hidden;text-align:right;direction:rtl"><span class="t" style="position:static;font-size:11px;color:#fff">Pivot &amp; Camarilla Calc...</span></div><svg class="ab" style="left:1004px;top:777px" width="18" height="16"><rect x="1.5" y="1.5" width="15" height="14" fill="none" stroke="#E8F0FF" stroke-dasharray="1 1"/><path d="M3 10L9 4 15 10" stroke="#101850" stroke-width="2.2" fill="none"/><path d="M4 13q2-3 5-1t5-1" stroke="#D02020" stroke-width="1.8" fill="none"/><path d="M3 7h12" stroke="#fff" stroke-dasharray="1 1"/></svg><div class="ab" style="left:1030px;top:774px;width:157px;height:24px;border-radius:3px;background:linear-gradient(#1E4498 0px,#2250B0 3px,#2452B4 12px,#2050AE 20px,#1E4AA4 24px);border:1px solid #0F2E80;box-shadow:inset 1px 1px 0 rgba(255,255,255,.15)"></div><svg width="117" height="10" style="position:absolute;left:1042px;top:780px" fill="#fff" shape-rendering="crispEdges"><path d="M19 1h1v1h-1zM19 2h1v1h-1zM29 2h1v1h-1zM63 2h1v1h-1zM94 2h1v1h-1zM99 2h1v1h-1zM104 2h1v1h-1zM106 2h1v1h-1zM111 2h1v1h-1zM116 2h1v1h-1zM13 3h1v1h-1zM15 3h1v1h-1zM19 3h1v1h-1zM29 3h1v1h-1zM44 3h1v1h-1zM51 3h1v1h-1zM55 3h1v1h-1zM62 3h1v1h-1zM65 3h1v1h-1zM71 3h1v1h-1zM75 3h1v1h-1zM11 4h1v1h-1zM14 4h1v1h-1zM19 4h1v1h-1zM29 4h1v1h-1zM45 4h1v1h-1zM52 4h1v1h-1zM54 4h1v1h-1zM62 4h1v1h-1zM64 4h1v1h-1zM66 4h1v1h-1zM72 4h1v1h-1zM74 4h1v1h-1zM88 4h1v1h-1zM90 4h1v1h-1zM98 4h1v1h-1zM101 4h1v1h-1zM103 4h1v1h-1zM110 4h1v1h-1zM113 4h1v1h-1zM115 4h1v1h-1zM19 5h1v1h-1zM29 5h1v1h-1zM43 5h1v1h-1zM50 5h1v1h-1zM56 5h1v1h-1zM62 5h1v1h-1zM70 5h1v1h-1zM76 5h1v1h-1zM89 5h1v1h-1zM19 6h1v1h-1zM29 6h1v1h-1zM36 6h1v1h-1zM38 6h1v1h-1zM40 6h1v1h-1zM43 6h1v1h-1zM50 6h1v1h-1zM62 6h1v1h-1zM70 6h1v1h-1zM95 6h1v1h-1zM107 6h1v1h-1zM10 7h1v1h-1zM15 7h1v1h-1zM19 7h1v1h-1zM29 7h1v1h-1zM36 7h1v1h-1zM45 7h1v1h-1zM62 7h1v1h-1zM79 7h1v1h-1zM95 7h1v1h-1zM104 7h1v1h-1zM107 7h1v1h-1zM116 7h1v1h-1zM1 8h1v1h-1zM5 8h1v1h-1zM8 8h1v1h-1zM17 8h1v1h-1zM29 8h1v1h-1zM44 8h1v1h-1zM51 8h1v1h-1zM62 8h1v1h-1zM71 8h1v1h-1zM93 8h1v1h-1zM95 8h1v1h-1zM107 8h1v1h-1z" fill-opacity="0.25"/><path d="M14 1h1v1h-1zM66 1h1v1h-1zM68 1h1v1h-1zM12 2h1v1h-1zM68 2h1v1h-1zM102 2h1v1h-1zM114 2h1v1h-1zM34 3h1v1h-1zM36 3h1v1h-1zM47 3h1v1h-1zM68 3h1v1h-1zM86 3h1v1h-1zM88 3h1v1h-1zM92 3h1v1h-1zM96 3h2v1h-2zM101 3h1v1h-1zM108 3h2v1h-2zM113 3h1v1h-1zM34 4h1v1h-1zM40 4h2v1h-2zM47 4h1v1h-1zM65 4h1v1h-1zM68 4h1v1h-1zM91 4h1v1h-1zM97 4h1v1h-1zM109 4h1v1h-1zM11 5h2v1h-2zM37 5h1v1h-1zM63 5h2v1h-2zM68 5h1v1h-1zM95 5h2v1h-2zM101 5h1v1h-1zM103 5h1v1h-1zM107 5h2v1h-2zM113 5h1v1h-1zM115 5h1v1h-1zM16 6h1v1h-1zM65 6h1v1h-1zM68 6h1v1h-1zM47 7h1v1h-1zM52 7h1v1h-1zM68 7h1v1h-1zM72 7h1v1h-1zM11 8h1v1h-1zM40 8h1v1h-1zM47 8h1v1h-1zM68 8h1v1h-1zM78 8h1v1h-1zM86 8h1v1h-1zM101 8h1v1h-1zM113 8h1v1h-1z" fill-opacity="0.50"/><path d="M33 1h1v1h-1zM13 2h1v1h-1zM62 2h1v1h-1zM66 2h2v1h-2zM89 2h1v1h-1zM91 2h1v1h-1zM95 2h1v1h-1zM98 2h1v1h-1zM103 2h1v1h-1zM107 2h1v1h-1zM110 2h1v1h-1zM115 2h1v1h-1zM12 3h1v1h-1zM14 3h1v1h-1zM40 3h1v1h-1zM52 3h1v1h-1zM54 3h1v1h-1zM63 3h1v1h-1zM66 3h2v1h-2zM72 3h1v1h-1zM74 3h1v1h-1zM77 3h1v1h-1zM85 3h1v1h-1zM89 3h1v1h-1zM91 3h1v1h-1zM102 3h1v1h-1zM114 3h1v1h-1zM12 4h1v1h-1zM15 4h1v1h-1zM51 4h1v1h-1zM63 4h1v1h-1zM67 4h1v1h-1zM71 4h1v1h-1zM89 4h1v1h-1zM92 4h1v1h-1zM95 4h2v1h-2zM102 4h1v1h-1zM107 4h2v1h-2zM114 4h1v1h-1zM41 5h1v1h-1zM44 5h1v1h-1zM65 5h1v1h-1zM67 5h1v1h-1zM90 5h3v1h-3zM37 6h1v1h-1zM41 6h1v1h-1zM44 6h1v1h-1zM51 6h1v1h-1zM67 6h1v1h-1zM71 6h1v1h-1zM96 6h1v1h-1zM108 6h1v1h-1zM11 7h1v1h-1zM16 7h1v1h-1zM37 7h1v1h-1zM40 7h2v1h-2zM67 7h1v1h-1zM96 7h1v1h-1zM108 7h1v1h-1zM0 8h1v1h-1zM4 8h1v1h-1zM7 8h1v1h-1zM10 8h1v1h-1zM16 8h1v1h-1zM37 8h1v1h-1zM39 8h1v1h-1zM41 8h1v1h-1zM52 8h1v1h-1zM67 8h1v1h-1zM72 8h1v1h-1zM85 8h1v1h-1zM92 8h1v1h-1zM96 8h1v1h-1zM104 8h1v1h-1zM108 8h1v1h-1zM116 8h1v1h-1z" fill-opacity="0.75"/><path d="M48 0h1v1h-1zM13 1h1v1h-1zM18 1h1v1h-1zM27 1h6v1h-6zM48 1h1v1h-1zM61 1h2v1h-2zM67 1h1v1h-1zM78 1h1v1h-1zM14 2h1v1h-1zM18 2h1v1h-1zM30 2h1v1h-1zM48 2h1v1h-1zM61 2h1v1h-1zM78 2h1v1h-1zM90 2h1v1h-1zM18 3h1v1h-1zM30 3h1v1h-1zM33 3h1v1h-1zM35 3h1v1h-1zM37 3h3v1h-3zM45 3h2v1h-2zM48 3h1v1h-1zM53 3h1v1h-1zM61 3h1v1h-1zM73 3h1v1h-1zM78 3h3v1h-3zM95 3h1v1h-1zM98 3h1v1h-1zM107 3h1v1h-1zM110 3h1v1h-1zM18 4h1v1h-1zM30 4h1v1h-1zM33 4h1v1h-1zM44 4h1v1h-1zM48 4h1v1h-1zM55 4h1v1h-1zM61 4h1v1h-1zM75 4h1v1h-1zM78 4h1v1h-1zM15 5h1v1h-1zM18 5h1v1h-1zM30 5h1v1h-1zM33 5h1v1h-1zM38 5h3v1h-3zM48 5h1v1h-1zM51 5h5v1h-5zM61 5h1v1h-1zM71 5h5v1h-5zM78 5h1v1h-1zM102 5h1v1h-1zM114 5h1v1h-1zM11 6h5v1h-5zM18 6h1v1h-1zM30 6h1v1h-1zM33 6h1v1h-1zM48 6h1v1h-1zM61 6h1v1h-1zM64 6h1v1h-1zM78 6h1v1h-1zM92 6h1v1h-1zM101 6h1v1h-1zM113 6h1v1h-1zM18 7h1v1h-1zM30 7h1v1h-1zM33 7h1v1h-1zM44 7h1v1h-1zM48 7h1v1h-1zM51 7h1v1h-1zM61 7h1v1h-1zM71 7h1v1h-1zM78 7h1v1h-1zM92 7h1v1h-1zM101 7h1v1h-1zM113 7h1v1h-1zM18 8h5v1h-5zM30 8h1v1h-1zM33 8h1v1h-1zM38 8h1v1h-1zM45 8h2v1h-2zM48 8h1v1h-1zM53 8h3v1h-3zM61 8h1v1h-1zM73 8h3v1h-3zM79 8h2v1h-2zM102 8h2v1h-2zM114 8h2v1h-2z"/></svg><svg class="ab" style="left:1161px;top:776px" width="20" height="18"><ellipse cx="9" cy="9" rx="8" ry="7.5" fill="#9098A4" stroke="#D8DEE8"/><path d="M5 12L9 5.5 13 12M6.5 8.5L3.5 11.5M11.5 8.5L14.5 11.5" stroke="#fff" stroke-width="1.5" fill="none"/></svg><div class="ab" style="left:1196px;top:771px;width:84px;height:29px;border-top-left-radius:12px 14px;border-bottom-left-radius:6px;background:linear-gradient(#B8E8B8 0px,#6AB86A 1px,#52A852 4px,#48A248 9px,#3E9C3E 14px,#20B420 16px,#18BC18 22px,#14C014 29px);box-shadow:inset 2px 1px 1px rgba(220,255,220,.5)"></div><svg width="23" height="19" style="position:absolute;left:1222px;top:776px;transform:skewX(-14deg)" fill="#1E5A1E" shape-rendering="crispEdges"><path d="M1 0h1v1h-1zM4 0h1v1h-1zM3 1h2v1h-2zM4 2h1v1h-1zM4 3h1v1h-1zM1 4h1v1h-1zM19 4h1v1h-1zM4 5h1v1h-1zM22 5h1v1h-1zM4 6h1v1h-1zM22 6h1v1h-1zM4 7h1v1h-1zM22 7h1v1h-1zM4 8h1v1h-1zM22 8h1v1h-1zM4 9h1v1h-1zM22 9h1v1h-1zM4 10h1v1h-1zM22 10h1v1h-1zM4 11h1v1h-1zM22 11h1v1h-1zM4 12h1v1h-1zM9 12h1v1h-1zM12 12h1v1h-1zM15 12h1v1h-1zM18 12h1v1h-1zM22 12h1v1h-1zM4 13h1v1h-1zM15 13h1v1h-1zM18 13h1v1h-1zM22 13h1v1h-1zM4 14h1v1h-1zM18 14h1v1h-1zM22 14h1v1h-1zM4 15h1v1h-1zM6 15h3v1h-3zM22 15h1v1h-1zM4 16h1v1h-1zM17 16h1v1h-1zM22 16h1v1h-1zM6 17h4v1h-4zM16 17h2v1h-2zM15 18h1v1h-1z" fill-opacity="0.25"/><path d="M3 2h1v1h-1zM3 3h1v1h-1zM1 5h1v1h-1zM19 5h1v1h-1zM1 6h1v1h-1zM19 6h1v1h-1zM1 7h1v1h-1zM19 7h1v1h-1zM1 8h1v1h-1zM19 8h1v1h-1zM1 9h1v1h-1zM19 9h1v1h-1zM1 10h1v1h-1zM19 10h1v1h-1zM1 11h1v1h-1zM19 11h1v1h-1zM1 12h1v1h-1zM19 12h1v1h-1zM1 13h1v1h-1zM12 13h1v1h-1zM19 13h1v1h-1zM1 14h1v1h-1zM15 14h1v1h-1zM19 14h1v1h-1zM1 15h1v1h-1zM14 15h1v1h-1zM19 15h1v1h-1zM1 16h1v1h-1zM11 16h1v1h-1zM19 16h1v1h-1z" fill-opacity="0.50"/><path d="M2 0h2v1h-2zM1 1h2v1h-2zM1 2h2v1h-2zM1 3h2v1h-2zM8 10h3v1h-3zM11 11h1v1h-1zM12 14h1v1h-1zM9 15h1v1h-1zM13 15h1v1h-1zM16 16h1v1h-1z" fill-opacity="0.75"/><path d="M2 4h2v1h-2zM20 4h2v1h-2zM2 5h2v1h-2zM20 5h2v1h-2zM2 6h2v1h-2zM20 6h2v1h-2zM2 7h2v1h-2zM20 7h2v1h-2zM2 8h2v1h-2zM20 8h2v1h-2zM2 9h2v1h-2zM20 9h2v1h-2zM2 10h2v1h-2zM20 10h2v1h-2zM2 11h2v1h-2zM9 11h2v1h-2zM20 11h2v1h-2zM2 12h2v1h-2zM10 12h2v1h-2zM16 12h2v1h-2zM20 12h2v1h-2zM2 13h2v1h-2zM10 13h2v1h-2zM16 13h2v1h-2zM20 13h2v1h-2zM2 14h2v1h-2zM10 14h2v1h-2zM16 14h2v1h-2zM20 14h2v1h-2zM2 15h2v1h-2zM10 15h3v1h-3zM15 15h3v1h-3zM20 15h2v1h-2zM2 16h2v1h-2zM6 16h5v1h-5zM12 16h4v1h-4zM20 16h2v1h-2zM16 18h2v1h-2z"/></svg><svg width="23" height="19" style="position:absolute;left:1221px;top:775px;transform:skewX(-14deg)" fill="#F4FFF4" shape-rendering="crispEdges"><path d="M1 0h1v1h-1zM4 0h1v1h-1zM3 1h2v1h-2zM4 2h1v1h-1zM4 3h1v1h-1zM1 4h1v1h-1zM19 4h1v1h-1zM4 5h1v1h-1zM22 5h1v1h-1zM4 6h1v1h-1zM22 6h1v1h-1zM4 7h1v1h-1zM22 7h1v1h-1zM4 8h1v1h-1zM22 8h1v1h-1zM4 9h1v1h-1zM22 9h1v1h-1zM4 10h1v1h-1zM22 10h1v1h-1zM4 11h1v1h-1zM22 11h1v1h-1zM4 12h1v1h-1zM9 12h1v1h-1zM12 12h1v1h-1zM15 12h1v1h-1zM18 12h1v1h-1zM22 12h1v1h-1zM4 13h1v1h-1zM15 13h1v1h-1zM18 13h1v1h-1zM22 13h1v1h-1zM4 14h1v1h-1zM18 14h1v1h-1zM22 14h1v1h-1zM4 15h1v1h-1zM6 15h3v1h-3zM22 15h1v1h-1zM4 16h1v1h-1zM17 16h1v1h-1zM22 16h1v1h-1zM6 17h4v1h-4zM16 17h2v1h-2zM15 18h1v1h-1z" fill-opacity="0.25"/><path d="M3 2h1v1h-1zM3 3h1v1h-1zM1 5h1v1h-1zM19 5h1v1h-1zM1 6h1v1h-1zM19 6h1v1h-1zM1 7h1v1h-1zM19 7h1v1h-1zM1 8h1v1h-1zM19 8h1v1h-1zM1 9h1v1h-1zM19 9h1v1h-1zM1 10h1v1h-1zM19 10h1v1h-1zM1 11h1v1h-1zM19 11h1v1h-1zM1 12h1v1h-1zM19 12h1v1h-1zM1 13h1v1h-1zM12 13h1v1h-1zM19 13h1v1h-1zM1 14h1v1h-1zM15 14h1v1h-1zM19 14h1v1h-1zM1 15h1v1h-1zM14 15h1v1h-1zM19 15h1v1h-1zM1 16h1v1h-1zM11 16h1v1h-1zM19 16h1v1h-1z" fill-opacity="0.50"/><path d="M2 0h2v1h-2zM1 1h2v1h-2zM1 2h2v1h-2zM1 3h2v1h-2zM8 10h3v1h-3zM11 11h1v1h-1zM12 14h1v1h-1zM9 15h1v1h-1zM13 15h1v1h-1zM16 16h1v1h-1z" fill-opacity="0.75"/><path d="M2 4h2v1h-2zM20 4h2v1h-2zM2 5h2v1h-2zM20 5h2v1h-2zM2 6h2v1h-2zM20 6h2v1h-2zM2 7h2v1h-2zM20 7h2v1h-2zM2 8h2v1h-2zM20 8h2v1h-2zM2 9h2v1h-2zM20 9h2v1h-2zM2 10h2v1h-2zM20 10h2v1h-2zM2 11h2v1h-2zM9 11h2v1h-2zM20 11h2v1h-2zM2 12h2v1h-2zM10 12h2v1h-2zM16 12h2v1h-2zM20 12h2v1h-2zM2 13h2v1h-2zM10 13h2v1h-2zM16 13h2v1h-2zM20 13h2v1h-2zM2 14h2v1h-2zM10 14h2v1h-2zM16 14h2v1h-2zM20 14h2v1h-2zM2 15h2v1h-2zM10 15h3v1h-3zM15 15h3v1h-3zM20 15h2v1h-2zM2 16h2v1h-2zM6 16h5v1h-5zM12 16h4v1h-4zM20 16h2v1h-2zM16 18h2v1h-2z"/></svg><svg class="ab" style="left:1245px;top:775px" width="20" height="19" viewBox="0 0 20 19"><path d="M3 3q3-2 6 0l-.8 6q-3-2-6 0z" fill="#E85A20"/><path d="M10 3q3-2 7 0l-1 6q-3-2-6.8 0z" fill="#6CC030"/><path d="M2 10q3-2 6 0l-.8 6q-3-2-6 0z" fill="#3A6AE0"/><path d="M9 10q3-2 7 0l-1 6q-3-2-6.8 0z" fill="#F4C020"/></svg></body></html>
